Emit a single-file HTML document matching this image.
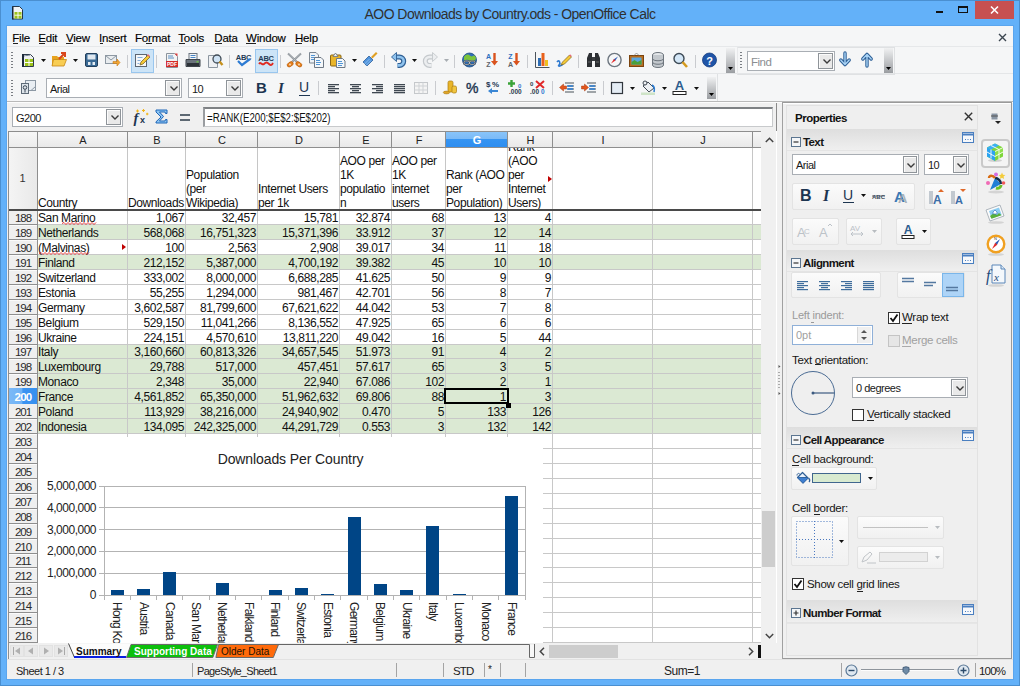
<!DOCTYPE html><html><head><meta charset="utf-8"><style>
*{margin:0;padding:0;box-sizing:border-box}
html,body{width:1020px;height:686px;overflow:hidden}
body{position:relative;background:#63B1F9;font-family:"Liberation Sans",sans-serif;color:#000}
.a{position:absolute}
.ui{font-size:11px;letter-spacing:-0.2px;color:#1e1e1e;white-space:nowrap}
.cell{position:absolute;font-size:12px;letter-spacing:-0.4px;line-height:15px;white-space:nowrap;color:#111}
.r{text-align:right}
.sep{position:absolute;width:1px;background:#c9cbcf}
svg{position:absolute;overflow:visible}
</style></head><body>
<div class="a" style="left:0;top:0;width:1020px;height:1px;background:#4a8fd0"></div>
<div class="a" style="left:0;top:0;width:1px;height:686px;background:#4a8fd0"></div>
<div class="a" style="left:1019px;top:0;width:1px;height:686px;background:#4a8fd0"></div>
<div class="a" style="left:0;top:685px;width:1020px;height:1px;background:#4a8fd0"></div>
<div class="a" style="left:300px;top:4px;width:420px;text-align:center;font-size:14px;letter-spacing:-0.55px;color:#303030;line-height:20px">AOO Downloads by Country.ods - OpenOffice Calc</div>
<svg style="left:11px;top:6px" width="12" height="14" viewBox="0 0 12 14"><path d="M1.5 0.5h7l3 3v9.5h-10z" fill="#f2f4f6" stroke="#26384a"/><path d="M1 0.5h1.5v13H1z" fill="#1a2738"/><rect x="3.5" y="6" width="7" height="6.5" fill="#9cc21b"/><path d="M3.5 9.2h7M7 6v6.5" stroke="#fff" stroke-width="0.9"/></svg>
<div class="a" style="left:936px;top:11px;width:7px;height:2px;background:#111"></div>
<div class="a" style="left:958px;top:6px;width:10px;height:7px;border:1px solid #111;border-top-width:2px"></div>
<div class="a" style="left:975px;top:1px;width:39px;height:18px;background:#C75050"></div>
<svg style="left:990px;top:6px" width="9" height="8"><path d="M1 0.5L8 7.5M8 0.5L1 7.5" stroke="#fff" stroke-width="1.6"/></svg>
<div class="a" style="left:6px;top:25px;width:1008px;height:655px;background:#5AA5EE"></div>
<div class="a" style="left:7px;top:26px;width:1006px;height:653px;background:#F5F6F7"></div>
<div class="a ui" style="left:12.3px;top:30px;font-size:11.5px;line-height:16px;color:#000;-webkit-text-stroke:0.15px #000">File</div>
<div class="a ui" style="left:38.3px;top:30px;font-size:11.5px;line-height:16px;color:#000;-webkit-text-stroke:0.15px #000">Edit</div>
<div class="a ui" style="left:66px;top:30px;font-size:11.5px;line-height:16px;color:#000;-webkit-text-stroke:0.15px #000">View</div>
<div class="a ui" style="left:99px;top:30px;font-size:11.5px;line-height:16px;color:#000;-webkit-text-stroke:0.15px #000">Insert</div>
<div class="a ui" style="left:135px;top:30px;font-size:11.5px;line-height:16px;color:#000;-webkit-text-stroke:0.15px #000">Format</div>
<div class="a ui" style="left:178.3px;top:30px;font-size:11.5px;line-height:16px;color:#000;-webkit-text-stroke:0.15px #000">Tools</div>
<div class="a ui" style="left:214.3px;top:30px;font-size:11.5px;line-height:16px;color:#000;-webkit-text-stroke:0.15px #000">Data</div>
<div class="a ui" style="left:246px;top:30px;font-size:11.5px;line-height:16px;color:#000;-webkit-text-stroke:0.15px #000">Window</div>
<div class="a ui" style="left:295px;top:30px;font-size:11.5px;line-height:16px;color:#000;-webkit-text-stroke:0.15px #000">Help</div>
<div class="a" style="left:12.5px;top:43px;width:5px;height:1px;background:#222"></div>
<div class="a" style="left:38.5px;top:43px;width:6px;height:1px;background:#222"></div>
<div class="a" style="left:66px;top:43px;width:7px;height:1px;background:#222"></div>
<div class="a" style="left:99.5px;top:43px;width:3px;height:1px;background:#222"></div>
<div class="a" style="left:146px;top:43px;width:6px;height:1px;background:#222"></div>
<div class="a" style="left:178.5px;top:43px;width:6px;height:1px;background:#222"></div>
<div class="a" style="left:214.5px;top:43px;width:7px;height:1px;background:#222"></div>
<div class="a" style="left:246px;top:43px;width:10px;height:1px;background:#222"></div>
<div class="a" style="left:295px;top:43px;width:7px;height:1px;background:#222"></div>
<svg style="left:998px;top:33px" width="9" height="9"><path d="M1 1L8 8M8 1L1 8" stroke="#3c4650" stroke-width="1.4"/></svg>
<div class="a" style="left:7px;top:46px;width:1006px;height:1px;background:#e6e8ea"></div>
<div class="a" style="left:7px;top:73px;width:1006px;height:1px;background:#e4e6e8"></div>
<div class="a" style="left:7px;top:102px;width:1006px;height:577px;background:#f0f0f0"></div>
<div class="a" style="left:7px;top:101px;width:1006px;height:1px;background:#b9b9b9"></div>
<div class="a" style="left:7px;top:102px;width:1006px;height:1px;background:#fcfcfc"></div>
<div class="a" style="left:11px;top:52px;width:2px;height:1px;background:#7a7e84"></div>
<div class="a" style="left:11px;top:55px;width:2px;height:1px;background:#7a7e84"></div>
<div class="a" style="left:11px;top:58px;width:2px;height:1px;background:#7a7e84"></div>
<div class="a" style="left:11px;top:61px;width:2px;height:1px;background:#7a7e84"></div>
<div class="a" style="left:11px;top:64px;width:2px;height:1px;background:#7a7e84"></div>
<div class="a" style="left:11px;top:67px;width:2px;height:1px;background:#7a7e84"></div>
<svg style="left:21px;top:53px" width="14" height="14" viewBox="0 0 14 14"><path d="M1.5 1.5h8l3 3v9h-11z" fill="#eef0f2" stroke="#2e3b4b"/><path d="M1 1h2v13H1z" fill="#1d2a3a"/><rect x="4" y="6" width="8" height="7" fill="#9cc21b"/><path d="M4 9.5h8M8 6v7" stroke="#fff" stroke-width="1"/><path d="M3 3c2-1 4 0 6-1" stroke="#7a8a9a" fill="none"/></svg>
<svg style="left:40.5px;top:58.5px" width="5" height="3" viewBox="0 0 5 3"><path d="M0 0h5L2.5 3z" fill="#111"/></svg>
<svg style="left:51px;top:52px" width="16" height="15" viewBox="0 0 16 15"><path d="M1 4h5l1 1h6v9H1z" fill="#e7a320"/><path d="M2.5 7.5h13l-2.5 6.5h-12z" fill="#f8cd53" stroke="#c78714" stroke-width="0.8"/><path d="M8 7l6-6M10 1h4v4" stroke="#d9461c" stroke-width="2" fill="none"/></svg>
<svg style="left:72.5px;top:58.5px" width="5" height="3" viewBox="0 0 5 3"><path d="M0 0h5L2.5 3z" fill="#111"/></svg>
<svg style="left:85px;top:53px" width="13" height="14" viewBox="0 0 13 14"><rect x="0.5" y="0.5" width="12" height="13" rx="1.5" fill="#3a6a95" stroke="#223f5c"/><rect x="2.5" y="1.5" width="8" height="5" fill="#dfe8f0"/><rect x="3" y="9" width="2.5" height="3" fill="#e6edf3"/><rect x="7.5" y="9" width="2.5" height="3" fill="#e6edf3"/></svg>
<svg style="left:105px;top:55px" width="15" height="11" viewBox="0 0 15 11"><rect x="0.5" y="0.5" width="11" height="8" fill="#e8ecef" stroke="#8d98a3"/><path d="M0.5 0.5l5.5 4.5l5.5-4.5" stroke="#8d98a3" fill="none"/><path d="M8 6.5h4v-2.5l3 3.5l-3 3.5v-2.5h-4z" fill="#f2a634" stroke="#c67a17" stroke-width="0.6"/></svg>
<div class="sep" style="left:127px;top:55px;height:13px"></div>
<div class="a" style="left:131px;top:49px;width:23px;height:24px;background:#cce4f7;border:1px solid #99c6ee"></div>
<svg style="left:135px;top:53px" width="15" height="15" viewBox="0 0 15 15"><rect x="0.5" y="1.5" width="11" height="12" fill="#f6f7f8" stroke="#5c6672"/><path d="M2.5 4.5h5M2.5 7.5h3M2.5 10.5h2" stroke="#6a9ad0" stroke-width="0.8"/><path d="M5 12l1-3l7-7l2 2l-7 7z" fill="#f5c935" stroke="#6d5a1e" stroke-width="0.7"/><path d="M12 2l2 2l1-1l-2-2z" fill="#e86a7a"/></svg>
<div class="sep" style="left:156px;top:55px;height:13px"></div>
<svg style="left:166px;top:53px" width="12" height="15" viewBox="0 0 12 15"><path d="M0.5 0.5h8l3 3v11h-11z" fill="#f3f3f3" stroke="#8a939c"/><path d="M2 3h5M2 5h6" stroke="#5b8fc4"/><rect x="0" y="8" width="12" height="6" fill="#d42a2a"/><path d="M8.5 0.5h3v3" fill="#e23b3b"/><text x="6" y="13" font-size="5" font-weight="bold" fill="#fff" text-anchor="middle" font-family="Liberation Sans">PDF</text></svg>
<svg style="left:185px;top:53px" width="16" height="15" viewBox="0 0 16 15"><rect x="4" y="0.5" width="8" height="6" fill="#f5f7f9" stroke="#6b7480"/><path d="M5.5 2.5h5M5.5 4.5h5" stroke="#4a86c5"/><path d="M1 6.5h14v7H1z" fill="#6b737c" stroke="#3f454c"/><rect x="2" y="10" width="12" height="3" fill="#2d3238"/><rect x="11.5" y="8" width="2" height="1.5" fill="#6ec04a"/></svg>
<svg style="left:208px;top:53px" width="15" height="15" viewBox="0 0 15 15"><path d="M0.5 2.5h7l2 2v10h-9z" fill="#eef0f3" stroke="#8c96a0"/><circle cx="9" cy="6" r="4" fill="#cfe3f5" stroke="#3f4a55" stroke-width="1.3"/><path d="M11.5 8.5l3 3.5" stroke="#c6901c" stroke-width="2.4"/></svg>
<div class="sep" style="left:229px;top:55px;height:13px"></div>
<svg style="left:236px;top:52px" width="15" height="16" viewBox="0 0 15 16"><text x="7.5" y="7.5" font-size="7.5" font-weight="bold" fill="#233a55" text-anchor="middle" font-family="Liberation Sans" letter-spacing="-0.3">ABC</text><path d="M2 9l4 4l8-6" stroke="#2c7bd3" stroke-width="2.2" fill="none"/></svg>
<div class="a" style="left:255px;top:49px;width:23px;height:24px;background:#cce4f7;border:1px solid #99c6ee"></div>
<svg style="left:258px;top:53px" width="16" height="14" viewBox="0 0 16 14"><text x="8" y="8" font-size="7.5" font-weight="bold" fill="#233a55" text-anchor="middle" font-family="Liberation Sans" letter-spacing="-0.3">ABC</text><path d="M1 11c2-3 3 2 5 0s3-2 5 0s3 1 4-1" stroke="#e0281e" stroke-width="1.8" fill="none"/></svg>
<div class="sep" style="left:280px;top:55px;height:13px"></div>
<svg style="left:286px;top:52px" width="17" height="16" viewBox="0 0 17 16"><path d="M2 1.5L11 10M15 1.5L6 10" stroke="#8a9096" stroke-width="1.8"/><path d="M2 1.5L11 10M15 1.5L6 10" stroke="#c9ced3" stroke-width="0.6"/><ellipse cx="4.2" cy="12.3" rx="3.3" ry="2.1" transform="rotate(-35 4.2 12.3)" fill="#e8821e" stroke="#b85c0c" stroke-width="0.7"/><ellipse cx="12.8" cy="12.3" rx="3.3" ry="2.1" transform="rotate(35 12.8 12.3)" fill="#e8821e" stroke="#b85c0c" stroke-width="0.7"/><circle cx="4" cy="12.5" r="0.9" fill="#f6e0c8"/><circle cx="13" cy="12.5" r="0.9" fill="#f6e0c8"/></svg>
<svg style="left:309px;top:52px" width="15" height="16" viewBox="0 0 15 16"><path d="M0.5 0.5h6.5l2.5 2.5v8h-9z" fill="#eef2f6" stroke="#7b8590"/><path d="M2 3.5h4M2 5.5h5M2 7.5h3" stroke="#3f8ad0" stroke-width="0.9"/><path d="M5.5 5.5h6.5l2.5 2.5v7.5h-9z" fill="#f4f7fa" stroke="#6f7985"/><path d="M7 8.5h4M7 10.5h5M7 12.5h4" stroke="#3f8ad0" stroke-width="0.9"/></svg>
<svg style="left:330px;top:52px" width="16" height="16" viewBox="0 0 16 16"><rect x="0.5" y="3" width="10.5" height="11" rx="1" fill="#e9b52a" stroke="#8a6514"/><path d="M3 4.5l2.5-3.5l2.5 3.5z" fill="#eef0f2" stroke="#6a7480" stroke-width="0.8"/><path d="M6.5 6.5h6l2.5 2.5v6.5h-8.5z" fill="#f4f7fa" stroke="#6f7985"/><path d="M8 9.5h4M8 11.5h5M8 13.5h4" stroke="#3f8ad0" stroke-width="0.9"/></svg>
<svg style="left:351.5px;top:58.5px" width="5" height="3" viewBox="0 0 5 3"><path d="M0 0h5L2.5 3z" fill="#111"/></svg>
<svg style="left:362px;top:52px" width="16" height="16" viewBox="0 0 16 16"><path d="M1 10l6-6l4 4l-6 6z" fill="#4f93dc" stroke="#2d5f9a" stroke-width="0.8"/><path d="M2.5 12l5-5M4 13.5l5-5" stroke="#9cc6f0" stroke-width="0.8"/><path d="M9 5l5-5l1.5 1.5l-5 5z" fill="#e0a025"/></svg>
<div class="sep" style="left:384px;top:55px;height:13px"></div>
<svg style="left:391px;top:52px" width="16" height="16" viewBox="0 0 16 16"><path d="M4 5h4.5a4.2 4.2 0 0 1 0 8.4h-2" stroke="#2f5f94" stroke-width="5" fill="none"/><path d="M4 5h4.5a4.2 4.2 0 0 1 0 8.4h-2" stroke="#8fc3ee" stroke-width="2.6" fill="none"/><path d="M0.5 5l5-4.5v9z" fill="#8fc3ee" stroke="#2f5f94" stroke-width="0.9" stroke-linejoin="round"/></svg>
<svg style="left:411.5px;top:58.5px" width="5" height="3" viewBox="0 0 5 3"><path d="M0 0h5L2.5 3z" fill="#111"/></svg>
<svg style="left:422px;top:52px" width="16" height="16" viewBox="0 0 16 16"><path d="M12 5h-4.5a4.2 4.2 0 0 0 0 8.4h2" stroke="#c4c8cc" stroke-width="5" fill="none"/><path d="M12 5h-4.5a4.2 4.2 0 0 0 0 8.4h2" stroke="#eceef0" stroke-width="2.6" fill="none"/><path d="M15.5 5l-5-4.5v9z" fill="#eceef0" stroke="#c4c8cc" stroke-width="0.9" stroke-linejoin="round"/></svg>
<svg style="left:443.5px;top:58.5px" width="5" height="3" viewBox="0 0 5 3"><path d="M0 0h5L2.5 3z" fill="#a8adb2"/></svg>
<div class="sep" style="left:454px;top:55px;height:13px"></div>
<svg style="left:462px;top:52px" width="15" height="16" viewBox="0 0 15 16"><circle cx="7.5" cy="8" r="7" fill="#2f6fb8" stroke="#1d4a80" stroke-width="0.8"/><path d="M2 5c1-2 3-3 5-2s2 2 4 1s2 0 3 2l-1 3c-2-1-3 1-5 0s-3-2-6 0z" fill="#7cc43a"/><rect x="2" y="9" width="5.5" height="3.5" rx="1.7" fill="none" stroke="#3a3f44" stroke-width="1.6"/><rect x="7.5" y="9" width="5.5" height="3.5" rx="1.7" fill="none" stroke="#3a3f44" stroke-width="1.6"/><rect x="2" y="9" width="5.5" height="3.5" rx="1.7" fill="none" stroke="#e6e9ec" stroke-width="0.6"/><rect x="7.5" y="9" width="5.5" height="3.5" rx="1.7" fill="none" stroke="#e6e9ec" stroke-width="0.6"/></svg>
<svg style="left:485px;top:52px" width="13" height="16" viewBox="0 0 13 16"><text x="3.5" y="6.5" font-size="7" font-weight="bold" fill="#2d6fc0" text-anchor="middle" font-family="Liberation Sans">A</text><text x="3.5" y="14.5" font-size="7" font-weight="bold" fill="#5d646b" text-anchor="middle" font-family="Liberation Sans">Z</text><path d="M9.5 1v10" stroke="#d9531e" stroke-width="2.4"/><path d="M6 9h7l-3.5 4.5z" fill="#d9531e"/></svg>
<svg style="left:507px;top:52px" width="13" height="16" viewBox="0 0 13 16"><text x="3.5" y="6.5" font-size="7" font-weight="bold" fill="#2d6fc0" text-anchor="middle" font-family="Liberation Sans">Z</text><text x="3.5" y="14.5" font-size="7" font-weight="bold" fill="#5d646b" text-anchor="middle" font-family="Liberation Sans">A</text><path d="M9.5 1v10" stroke="#d9531e" stroke-width="2.4"/><path d="M6 9h7l-3.5 4.5z" fill="#d9531e"/></svg>
<div class="sep" style="left:527px;top:55px;height:13px"></div>
<svg style="left:535px;top:52px" width="15" height="16" viewBox="0 0 15 16"><path d="M0.5 0v15.5h14" stroke="#4b535b" fill="none"/><rect x="3" y="6" width="3" height="8" fill="#2f6eb5"/><rect x="6.5" y="1" width="3" height="13" fill="#e8611c"/><rect x="10" y="8" width="3" height="6" fill="#f0c020"/></svg>
<svg style="left:556px;top:53px" width="15" height="14" viewBox="0 0 15 14"><path d="M1 9c2-3 4 1 2 3s3 1 4-1" stroke="#2f7ad0" stroke-width="1.6" fill="none"/><path d="M5 12l1.5-3l7-7l2 2l-7 7z" fill="#f5c935" stroke="#7b6420" stroke-width="0.7"/><path d="M13 2l2 2l0.5-1.5l-1-1z" fill="#e86a7a"/></svg>
<div class="sep" style="left:578px;top:55px;height:13px"></div>
<svg style="left:586px;top:52px" width="15" height="16" viewBox="0 0 15 16"><path d="M1 6l2-5h3v14H1z" fill="#2c2f33"/><path d="M14 6l-2-5h-3v14h5z" fill="#2c2f33"/><rect x="6" y="5" width="3" height="4" fill="#3a3d41"/><path d="M2 10h3M10 10h3" stroke="#777" stroke-width="0.8"/></svg>
<svg style="left:607px;top:52px" width="15" height="16" viewBox="0 0 15 16"><circle cx="7.5" cy="8" r="6.6" fill="#f6f7f8" stroke="#6d7680" stroke-width="1.4"/><path d="M11 4.5l-3 4.5l-1.5-1.5z" fill="#2d5db8"/><path d="M4 11.5l3-4.5l1.5 1.5z" fill="#e22a2a"/></svg>
<svg style="left:629px;top:53px" width="15" height="14" viewBox="0 0 15 14"><rect x="0.5" y="2.5" width="14" height="11" fill="#b86d1e" stroke="#7b4510"/><rect x="2.5" y="4.5" width="10" height="7" fill="#5aa7e0"/><path d="M2.5 9l3-2l3 2l4-2v4.5h-10z" fill="#4aa03a"/><path d="M5 2.5l2.5-2.5l2.5 2.5" stroke="#888" fill="none" stroke-width="0.8"/></svg>
<svg style="left:652px;top:52px" width="12" height="16" viewBox="0 0 12 16"><ellipse cx="6" cy="3" rx="5.5" ry="2.5" fill="#e3e6e9" stroke="#6e767e"/><path d="M0.5 3v10c0 3.3 11 3.3 11 0V3" fill="#c3c8cd" stroke="#6e767e"/><path d="M0.5 6.5c0 3 11 3 11 0M0.5 10c0 3 11 3 11 0" stroke="#6e767e" fill="none"/></svg>
<svg style="left:673px;top:52px" width="15" height="16" viewBox="0 0 15 16"><circle cx="6" cy="6.5" r="5" fill="#d4e7f7" stroke="#3d4a56" stroke-width="1.4"/><path d="M9.5 10l4.5 5" stroke="#d49a1e" stroke-width="2.6"/></svg>
<div class="sep" style="left:695px;top:55px;height:13px"></div>
<svg style="left:702px;top:52px" width="15" height="16" viewBox="0 0 15 16"><circle cx="7.5" cy="8" r="7" fill="#1f55a8" stroke="#163e80" stroke-width="0.8"/><text x="7.5" y="12.5" font-size="11" font-weight="bold" fill="#fff" text-anchor="middle" font-family="Liberation Sans">?</text></svg>
<div class="a" style="left:726px;top:48px;width:9px;height:25px;background:linear-gradient(#f0f1f2,#9a9da1)"></div>
<svg style="left:728px;top:67px" width="5" height="3" viewBox="0 0 5 3"><path d="M0 0h5L2.5 3z" fill="#000"/></svg>
<div class="a" style="left:737px;top:47px;width:158px;height:28px;border:1px solid #dfe1e3;border-left-color:#e8e9eb"></div>
<div class="a" style="left:740px;top:52px;width:2px;height:1px;background:#7a7e84"></div>
<div class="a" style="left:740px;top:55px;width:2px;height:1px;background:#7a7e84"></div>
<div class="a" style="left:740px;top:58px;width:2px;height:1px;background:#7a7e84"></div>
<div class="a" style="left:740px;top:61px;width:2px;height:1px;background:#7a7e84"></div>
<div class="a" style="left:740px;top:64px;width:2px;height:1px;background:#7a7e84"></div>
<div class="a" style="left:740px;top:67px;width:2px;height:1px;background:#7a7e84"></div>
<div class="a" style="left:747px;top:51px;width:88px;height:20px;background:#fff;border:1px solid #a9aeb4"></div>
<div class="a ui" style="left:751px;top:52px;font-size:11.5px;color:#8a8d91;line-height:20px;letter-spacing:-0.5px">Find</div>
<div class="a" style="left:818px;top:53px;width:15px;height:16px;background:#e9e9e9;border:1px solid #8f9499;box-shadow:inset 1px 1px 0 #fbfbfb"></div>
<svg style="left:822.5px;top:59.0px" width="8" height="5" viewBox="0 0 8 5"><path d="M0.5 0.5l3.5 3.5l3.5-3.5" stroke="#3a3a3a" stroke-width="1.4" fill="none"/></svg>
<svg style="left:839px;top:52px" width="12" height="15" viewBox="0 0 12 15"><path d="M6 1v11M1.8 8l4.2 4.6l4.2-4.6" stroke="#2d5f96" stroke-width="3.4" fill="none" stroke-linecap="round" stroke-linejoin="round"/><path d="M6 1v11M1.8 8l4.2 4.6l4.2-4.6" stroke="#a9d3f5" stroke-width="1.4" fill="none" stroke-linecap="round" stroke-linejoin="round"/></svg>
<svg style="left:861px;top:52px" width="12" height="15" viewBox="0 0 12 15"><path d="M6 14V3M1.8 7l4.2-4.6l4.2 4.6" stroke="#2d5f96" stroke-width="3.4" fill="none" stroke-linecap="round" stroke-linejoin="round"/><path d="M6 14V3M1.8 7l4.2-4.6l4.2 4.6" stroke="#a9d3f5" stroke-width="1.4" fill="none" stroke-linecap="round" stroke-linejoin="round"/></svg>
<div class="a" style="left:884px;top:48px;width:9px;height:25px;background:linear-gradient(#f0f1f2,#9a9da1)"></div>
<svg style="left:886px;top:67px" width="5" height="3" viewBox="0 0 5 3"><path d="M0 0h5L2.5 3z" fill="#000"/></svg>
<div class="a" style="left:11px;top:80px;width:2px;height:1px;background:#7a7e84"></div>
<div class="a" style="left:11px;top:83px;width:2px;height:1px;background:#7a7e84"></div>
<div class="a" style="left:11px;top:86px;width:2px;height:1px;background:#7a7e84"></div>
<div class="a" style="left:11px;top:89px;width:2px;height:1px;background:#7a7e84"></div>
<div class="a" style="left:11px;top:92px;width:2px;height:1px;background:#7a7e84"></div>
<div class="a" style="left:11px;top:95px;width:2px;height:1px;background:#7a7e84"></div>
<svg style="left:21px;top:80px" width="15" height="14" viewBox="0 0 15 14"><rect x="4.5" y="0.5" width="10" height="10" fill="#e9eef3" stroke="#8c98a4"/><path d="M10 10.5l4.5-4" stroke="#8c98a4"/><rect x="0.5" y="3.5" width="7" height="10" fill="#dde4ea" stroke="#5e6b78"/><circle cx="4" cy="7.5" r="1.8" fill="none" stroke="#3b4756"/><path d="M4 9.5v3" stroke="#3b4756"/></svg>
<div class="a" style="left:46px;top:78px;width:136px;height:20px;background:#fff;border:1px solid #a9aeb4"></div>
<div class="a ui" style="left:50px;top:79px;font-size:11px;color:#1a1a1a;line-height:20px;letter-spacing:-0.5px">Arial</div>
<div class="a" style="left:165px;top:80px;width:15px;height:16px;background:#e9e9e9;border:1px solid #8f9499;box-shadow:inset 1px 1px 0 #fbfbfb"></div>
<svg style="left:169.5px;top:86.0px" width="8" height="5" viewBox="0 0 8 5"><path d="M0.5 0.5l3.5 3.5l3.5-3.5" stroke="#3a3a3a" stroke-width="1.4" fill="none"/></svg>
<div class="a" style="left:188px;top:78px;width:55px;height:20px;background:#fff;border:1px solid #a9aeb4"></div>
<div class="a ui" style="left:192px;top:79px;font-size:11px;color:#1a1a1a;line-height:20px;letter-spacing:-0.5px">10</div>
<div class="a" style="left:226px;top:80px;width:15px;height:16px;background:#e9e9e9;border:1px solid #8f9499;box-shadow:inset 1px 1px 0 #fbfbfb"></div>
<svg style="left:230.5px;top:86.0px" width="8" height="5" viewBox="0 0 8 5"><path d="M0.5 0.5l3.5 3.5l3.5-3.5" stroke="#3a3a3a" stroke-width="1.4" fill="none"/></svg>
<div class="a" style="left:256px;top:79px;font-size:15px;font-weight:bold;color:#1d3550;line-height:18px">B</div>
<div class="a" style="left:278px;top:79px;font-size:15px;font-style:italic;font-weight:bold;color:#1d3550;line-height:18px;font-family:'Liberation Serif'">I</div>
<div class="a" style="left:299px;top:79px;font-size:14px;color:#1d3550;line-height:17px">U</div>
<div class="a" style="left:299px;top:95px;width:11px;height:1px;background:#1d3550"></div>
<div class="sep" style="left:318px;top:81px;height:14px"></div>
<svg style="left:328px;top:84px" width="11" height="10" viewBox="0 0 11 10"><rect x="0" y="0" width="11" height="1.3" fill="#3f4852"/><rect x="0" y="2" width="7" height="1.3" fill="#3f4852"/><rect x="0" y="4" width="11" height="1.3" fill="#3f4852"/><rect x="0" y="6" width="7" height="1.3" fill="#3f4852"/><rect x="0" y="8" width="11" height="1.3" fill="#3f4852"/></svg>
<svg style="left:350px;top:84px" width="11" height="10" viewBox="0 0 11 10"><rect x="0.0" y="0" width="11" height="1.3" fill="#3f4852"/><rect x="2.0" y="2" width="7" height="1.3" fill="#3f4852"/><rect x="0.0" y="4" width="11" height="1.3" fill="#3f4852"/><rect x="2.0" y="6" width="7" height="1.3" fill="#3f4852"/><rect x="0.0" y="8" width="11" height="1.3" fill="#3f4852"/></svg>
<svg style="left:372px;top:84px" width="11" height="10" viewBox="0 0 11 10"><rect x="0" y="0" width="11" height="1.3" fill="#3f4852"/><rect x="4" y="2" width="7" height="1.3" fill="#3f4852"/><rect x="0" y="4" width="11" height="1.3" fill="#3f4852"/><rect x="4" y="6" width="7" height="1.3" fill="#3f4852"/><rect x="0" y="8" width="11" height="1.3" fill="#3f4852"/></svg>
<svg style="left:394px;top:84px" width="11" height="10" viewBox="0 0 11 10"><rect x="0" y="0" width="11" height="1.3" fill="#3f4852"/><rect x="0" y="2" width="11" height="1.3" fill="#3f4852"/><rect x="0" y="4" width="11" height="1.3" fill="#3f4852"/><rect x="0" y="6" width="11" height="1.3" fill="#3f4852"/><rect x="0" y="8" width="11" height="1.3" fill="#3f4852"/></svg>
<svg style="left:414px;top:82px" width="14" height="12" viewBox="0 0 14 12"><rect x="0.5" y="0.5" width="13" height="11" fill="#f4f4f4" stroke="#c5c8cb"/><path d="M0.5 4h13M0.5 8h13M5 0.5v11M9 0.5v11" stroke="#cfd2d5"/></svg>
<div class="sep" style="left:435px;top:81px;height:14px"></div>
<svg style="left:443px;top:80px" width="14" height="14" viewBox="0 0 14 14"><rect x="5" y="1" width="5" height="11" rx="1.5" fill="#e9b52a" stroke="#a97a10" stroke-width="0.7"/><rect x="9" y="6" width="4.5" height="7" rx="1.5" fill="#f0c540" stroke="#a97a10" stroke-width="0.7"/><ellipse cx="3.5" cy="12.5" rx="3.2" ry="1.4" fill="#e0a52a" stroke="#a97a10" stroke-width="0.6"/></svg>
<div class="a" style="left:466px;top:80px;font-size:14px;color:#1d3550;line-height:17px;-webkit-text-stroke:0.4px #1d3550">%</div>
<svg style="left:486px;top:80px" width="16" height="14" viewBox="0 0 16 14"><text x="0" y="7" font-size="8" font-weight="bold" fill="#1d3550" font-family="Liberation Sans">$</text><text x="6" y="7" font-size="8" font-weight="bold" fill="#1d3550" font-family="Liberation Sans">%</text><path d="M5 11h7" stroke="#3a86d4" stroke-width="2"/><path d="M2 11l4-3v6z" fill="#3a86d4"/></svg>
<svg style="left:508px;top:80px" width="16" height="14" viewBox="0 0 16 14"><path d="M3.5 0v7M0 3.5h7" stroke="#3aa338" stroke-width="2.4"/><text x="10" y="8" font-size="6" font-weight="bold" fill="#2f78d0" font-family="Liberation Sans">0</text><text x="1" y="13.5" font-size="6.5" font-weight="bold" fill="#2c3e50" font-family="Liberation Sans">.000</text></svg>
<svg style="left:530px;top:80px" width="16" height="14" viewBox="0 0 16 14"><text x="0" y="6" font-size="6" font-weight="bold" fill="#2c3e50" font-family="Liberation Sans">0</text><path d="M6 1l8 7M14 1l-8 7" stroke="#e0282a" stroke-width="2"/><text x="0" y="13.5" font-size="6.5" font-weight="bold" fill="#2c3e50" font-family="Liberation Sans">.00</text><text x="11" y="13.5" font-size="6.5" font-weight="bold" fill="#2f78d0" font-family="Liberation Sans">0</text></svg>
<div class="sep" style="left:552px;top:81px;height:14px"></div>
<svg style="left:559px;top:81px" width="16" height="13" viewBox="0 0 16 13"><path d="M6 2h9M9 5h6M9 8h6M6 11h9" stroke="#4a525a" stroke-width="1.1"/><path d="M8 5h6M8 8h6" stroke="#2d7dd2" stroke-width="1.4"/><path d="M0.5 6.5l4-3.5v2h3v3h-3v2z" fill="#e2571e" stroke="#a83a10" stroke-width="0.5"/></svg>
<svg style="left:581px;top:81px" width="16" height="13" viewBox="0 0 16 13"><path d="M6 2h9M9 5h6M9 8h6M6 11h9" stroke="#4a525a" stroke-width="1.1"/><path d="M8 5h6M8 8h6" stroke="#2d7dd2" stroke-width="1.4"/><path d="M7.5 6.5l-4-3.5v2h-3v3h3v2z" fill="#e2571e" stroke="#a83a10" stroke-width="0.5"/></svg>
<div class="sep" style="left:603px;top:81px;height:14px"></div>
<svg style="left:611px;top:82px" width="12" height="12" viewBox="0 0 12 12"><rect x="0.5" y="0.5" width="11" height="11" fill="#e4ecf4" stroke="#30363d" stroke-width="1.2"/></svg>
<svg style="left:629.5px;top:86.5px" width="5" height="3" viewBox="0 0 5 3"><path d="M0 0h5L2.5 3z" fill="#111"/></svg>
<svg style="left:641px;top:80px" width="15" height="15" viewBox="0 0 15 15"><path d="M2 6l5-4l6 6l-5 4z" fill="#eef1f4" stroke="#3f4852"/><path d="M11 5c2 1 3 3 2 7" stroke="#2d7dd2" stroke-width="1.6" fill="none"/><circle cx="4" cy="3" r="2" fill="#eef1f4" stroke="#3f4852"/><rect x="0" y="12.5" width="14" height="2.5" fill="#cfe4c8"/></svg>
<svg style="left:661.5px;top:86.5px" width="5" height="3" viewBox="0 0 5 3"><path d="M0 0h5L2.5 3z" fill="#111"/></svg>
<svg style="left:672px;top:79px" width="16" height="16" viewBox="0 0 16 16"><text x="7.5" y="11" font-size="13" font-weight="bold" fill="#2b5c8e" text-anchor="middle" font-family="Liberation Sans">A</text><rect x="1" y="12.5" width="13" height="3" fill="#fff" stroke="#222"/></svg>
<svg style="left:693.5px;top:86.5px" width="5" height="3" viewBox="0 0 5 3"><path d="M0 0h5L2.5 3z" fill="#111"/></svg>
<div class="a" style="left:707px;top:77px;width:9px;height:22px;background:linear-gradient(#f0f1f2,#9a9da1)"></div>
<svg style="left:709px;top:93px" width="5" height="3" viewBox="0 0 5 3"><path d="M0 0h5L2.5 3z" fill="#000"/></svg>
<div class="a" style="left:717px;top:74px;width:1px;height:27px;background:#dfe1e3"></div>
<div class="a" style="left:12px;top:107px;width:111px;height:20px;background:#fff;border:1px solid #a9aeb4"></div>
<div class="a ui" style="left:16px;top:108px;font-size:11px;color:#1a1a1a;line-height:20px;letter-spacing:-0.5px">G200</div>
<div class="a" style="left:106px;top:109px;width:15px;height:16px;background:#e9e9e9;border:1px solid #8f9499;box-shadow:inset 1px 1px 0 #fbfbfb"></div>
<svg style="left:110.5px;top:115.0px" width="8" height="5" viewBox="0 0 8 5"><path d="M0.5 0.5l3.5 3.5l3.5-3.5" stroke="#3a3a3a" stroke-width="1.4" fill="none"/></svg>
<svg style="left:133px;top:108px" width="16" height="18" viewBox="0 0 16 18"><text x="0.5" y="14.5" font-size="14.5" font-style="italic" font-weight="bold" font-family="Liberation Serif" fill="#1d3550">f</text><text x="7" y="15" font-size="9" font-family="Liberation Sans" font-weight="bold" fill="#1d3550">x</text><path d="M3 3h3M4.5 1.5v3M9 2.5h3M10.5 1v3M13 6h2.5M14.2 4.8v2.5" stroke="#f2b418" stroke-width="1.1"/></svg>
<svg style="left:155px;top:109px" width="14" height="15" viewBox="0 0 14 15"><path d="M1 1h11v3.5h-1.5L10 3H4.5l4 4.5l-4 4.5H10l0.5-1.5H12v3.5H1v-1.2l5-4.8l-5-5z" fill="#8cc4f2" stroke="#1f66b8" stroke-width="1"/></svg>
<div class="a" style="left:180px;top:114px;width:10px;height:2px;background:#5d6872"></div>
<div class="a" style="left:180px;top:119px;width:10px;height:2px;background:#5d6872"></div>
<div class="a" style="left:203px;top:107px;width:570px;height:20px;background:#fff;border:1px solid #c8cacc;border-top:2px solid #7e8184;border-left:2px solid #9a9da0"></div>
<div class="a ui" style="left:207px;top:109px;font-size:12px;line-height:18px;color:#111;letter-spacing:0px;transform:scaleX(0.81);transform-origin:0 0">=RANK(E200;$E$2:$E$202)</div>
<div class="a" style="left:776px;top:103px;width:1px;height:556px;background:#8a8a8a"></div>
<div class="a" style="left:777px;top:103px;width:1px;height:556px;background:#fafafa"></div>
<div class="a" style="left:8px;top:131px;width:769px;height:512px;background:#fff"></div>
<div class="a" style="left:8px;top:131px;width:753px;height:17px;background:linear-gradient(#f7f7f7,#e9e9e9);border-top:1px solid #8e8e8e;border-bottom:1px solid #8e8e8e;border-left:1px solid #8e8e8e"></div>
<div class="a" style="left:37px;top:132px;width:90px;text-align:center;font-size:11px;color:#222;line-height:15px;padding-left:2px;margin-top:1px">A</div>
<div class="a" style="left:127px;top:132px;width:58px;text-align:center;font-size:11px;color:#222;line-height:15px;padding-left:2px;margin-top:1px">B</div>
<div class="a" style="left:185px;top:132px;width:72px;text-align:center;font-size:11px;color:#222;line-height:15px;padding-left:2px;margin-top:1px">C</div>
<div class="a" style="left:257px;top:132px;width:82px;text-align:center;font-size:11px;color:#222;line-height:15px;padding-left:2px;margin-top:1px">D</div>
<div class="a" style="left:339px;top:132px;width:52px;text-align:center;font-size:11px;color:#222;line-height:15px;padding-left:2px;margin-top:1px">E</div>
<div class="a" style="left:391px;top:132px;width:54px;text-align:center;font-size:11px;color:#222;line-height:15px;padding-left:2px;margin-top:1px">F</div>
<div class="a" style="left:445px;top:132px;width:62px;height:15px;background:linear-gradient(#88c4fa 0%,#7cbaf6 45%,#3594f2 50%,#2f8ef0 100%);border-left:1px solid #1f7ee8"></div>
<div class="a" style="left:445px;top:132px;width:62px;text-align:center;font-size:11px;font-weight:bold;color:#fff;line-height:15px;padding-left:2px;margin-top:1px">G</div>
<div class="a" style="left:507px;top:132px;width:45px;text-align:center;font-size:11px;color:#222;line-height:15px;padding-left:2px;margin-top:1px">H</div>
<div class="a" style="left:552px;top:132px;width:100px;text-align:center;font-size:11px;color:#222;line-height:15px;padding-left:2px;margin-top:1px">I</div>
<div class="a" style="left:652px;top:132px;width:100px;text-align:center;font-size:11px;color:#222;line-height:15px;padding-left:2px;margin-top:1px">J</div>
<div class="a" style="left:37px;top:131px;width:1px;height:17px;background:#8e8e8e"></div>
<div class="a" style="left:127px;top:131px;width:1px;height:17px;background:#8e8e8e"></div>
<div class="a" style="left:185px;top:131px;width:1px;height:17px;background:#8e8e8e"></div>
<div class="a" style="left:257px;top:131px;width:1px;height:17px;background:#8e8e8e"></div>
<div class="a" style="left:339px;top:131px;width:1px;height:17px;background:#8e8e8e"></div>
<div class="a" style="left:391px;top:131px;width:1px;height:17px;background:#8e8e8e"></div>
<div class="a" style="left:445px;top:131px;width:1px;height:17px;background:#8e8e8e"></div>
<div class="a" style="left:507px;top:131px;width:1px;height:17px;background:#8e8e8e"></div>
<div class="a" style="left:552px;top:131px;width:1px;height:17px;background:#8e8e8e"></div>
<div class="a" style="left:652px;top:131px;width:1px;height:17px;background:#8e8e8e"></div>
<div class="a" style="left:752px;top:131px;width:1px;height:17px;background:#8e8e8e"></div>
<div class="a" style="left:8px;top:131px;width:30px;height:512px;background:#efefef;border-left:1px solid #8e8e8e;border-right:1px solid #8e8e8e"></div>
<div class="a" style="left:8px;top:131px;width:753px;height:1px;background:#8e8e8e"></div>
<div class="a" style="left:9px;top:132px;width:28px;height:15px;background:linear-gradient(#f7f7f7,#ececec)"></div>
<div class="a" style="left:8px;top:147px;width:753px;height:1px;background:#8e8e8e"></div>
<div class="a" style="left:9px;top:148px;width:28px;height:61px;background:linear-gradient(90deg,#f4f4f4,#e9e9e9)"></div>
<div class="a" style="left:9px;top:171px;width:27px;text-align:center;font-size:11px;color:#333;line-height:15px">1</div>
<div class="a" style="left:127px;top:148px;width:1px;height:61px;background:#c6c6c6"></div>
<div class="a" style="left:185px;top:148px;width:1px;height:61px;background:#c6c6c6"></div>
<div class="a" style="left:257px;top:148px;width:1px;height:61px;background:#c6c6c6"></div>
<div class="a" style="left:339px;top:148px;width:1px;height:61px;background:#c6c6c6"></div>
<div class="a" style="left:391px;top:148px;width:1px;height:61px;background:#c6c6c6"></div>
<div class="a" style="left:445px;top:148px;width:1px;height:61px;background:#c6c6c6"></div>
<div class="a" style="left:507px;top:148px;width:1px;height:61px;background:#c6c6c6"></div>
<div class="a" style="left:552px;top:148px;width:1px;height:61px;background:#c6c6c6"></div>
<div class="a" style="left:652px;top:148px;width:1px;height:61px;background:#c6c6c6"></div>
<div class="a" style="left:752px;top:148px;width:1px;height:61px;background:#c6c6c6"></div>
<div class="a" style="left:0;top:148px;width:761px;height:61px;overflow:hidden">
<div class="cell" style="left:38px;top:48px;line-height:14px">Country</div>
<div class="cell" style="left:128px;top:48px;line-height:14px">Downloads</div>
<div class="cell" style="left:186px;top:20px;line-height:14px">Population</div>
<div class="cell" style="left:186px;top:34px;line-height:14px">(per</div>
<div class="cell" style="left:186px;top:48px;line-height:14px">Wikipedia)</div>
<div class="cell" style="left:258px;top:34px;line-height:14px">Internet Users</div>
<div class="cell" style="left:258px;top:48px;line-height:14px">per 1k</div>
<div class="cell" style="left:340px;top:6px;line-height:14px">AOO per</div>
<div class="cell" style="left:340px;top:20px;line-height:14px">1K</div>
<div class="cell" style="left:340px;top:34px;line-height:14px">populatio</div>
<div class="cell" style="left:340px;top:48px;line-height:14px">n</div>
<div class="cell" style="left:392px;top:6px;line-height:14px">AOO per</div>
<div class="cell" style="left:392px;top:20px;line-height:14px">1K</div>
<div class="cell" style="left:392px;top:34px;line-height:14px">internet</div>
<div class="cell" style="left:392px;top:48px;line-height:14px">users</div>
<div class="cell" style="left:446px;top:20px;line-height:14px">Rank (AOO</div>
<div class="cell" style="left:446px;top:34px;line-height:14px">per</div>
<div class="cell" style="left:446px;top:48px;line-height:14px">Population)</div>
<div class="cell" style="left:508px;top:-8px;line-height:14px">Rank</div>
<div class="cell" style="left:508px;top:6px;line-height:14px">(AOO</div>
<div class="cell" style="left:508px;top:20px;line-height:14px">per</div>
<div class="cell" style="left:508px;top:34px;line-height:14px">Internet</div>
<div class="cell" style="left:508px;top:48px;line-height:14px">Users)</div>
</div>
<svg style="left:548px;top:176px" width="4" height="6" viewBox="0 0 4 6"><path d="M0 0l4 3l-4 3z" fill="#c00000"/></svg>
<div class="a" style="left:8px;top:209px;width:753px;height:2px;background:#4a4a4a"></div>
<div class="a" style="left:38px;top:225px;width:723px;height:14px;background:#dbe9d3"></div>
<div class="a" style="left:38px;top:255px;width:723px;height:14px;background:#dbe9d3"></div>
<div class="a" style="left:38px;top:345px;width:723px;height:13px;background:#dbe9d3"></div>
<div class="a" style="left:38px;top:359px;width:723px;height:14px;background:#dbe9d3"></div>
<div class="a" style="left:38px;top:374px;width:723px;height:14px;background:#dbe9d3"></div>
<div class="a" style="left:38px;top:389px;width:723px;height:14px;background:#dbe9d3"></div>
<div class="a" style="left:38px;top:404px;width:723px;height:14px;background:#dbe9d3"></div>
<div class="a" style="left:38px;top:419px;width:723px;height:14px;background:#dbe9d3"></div>
<div class="a" style="left:38px;top:224px;width:723px;height:1px;background:#c8c8c8"></div>
<div class="a" style="left:38px;top:239px;width:723px;height:1px;background:#c8c8c8"></div>
<div class="a" style="left:38px;top:254px;width:723px;height:1px;background:#c8c8c8"></div>
<div class="a" style="left:38px;top:269px;width:723px;height:1px;background:#c8c8c8"></div>
<div class="a" style="left:38px;top:284px;width:723px;height:1px;background:#c8c8c8"></div>
<div class="a" style="left:38px;top:299px;width:723px;height:1px;background:#c8c8c8"></div>
<div class="a" style="left:38px;top:314px;width:723px;height:1px;background:#c8c8c8"></div>
<div class="a" style="left:38px;top:329px;width:723px;height:1px;background:#c8c8c8"></div>
<div class="a" style="left:38px;top:344px;width:723px;height:1px;background:#c8c8c8"></div>
<div class="a" style="left:38px;top:358px;width:723px;height:1px;background:#c8c8c8"></div>
<div class="a" style="left:38px;top:373px;width:723px;height:1px;background:#c8c8c8"></div>
<div class="a" style="left:38px;top:388px;width:723px;height:1px;background:#c8c8c8"></div>
<div class="a" style="left:38px;top:403px;width:723px;height:1px;background:#c8c8c8"></div>
<div class="a" style="left:38px;top:418px;width:723px;height:1px;background:#c8c8c8"></div>
<div class="a" style="left:38px;top:433px;width:723px;height:1px;background:#c8c8c8"></div>
<div class="a" style="left:543px;top:448px;width:218px;height:1px;background:#c8c8c8"></div>
<div class="a" style="left:543px;top:463px;width:218px;height:1px;background:#c8c8c8"></div>
<div class="a" style="left:543px;top:478px;width:218px;height:1px;background:#c8c8c8"></div>
<div class="a" style="left:543px;top:493px;width:218px;height:1px;background:#c8c8c8"></div>
<div class="a" style="left:543px;top:508px;width:218px;height:1px;background:#c8c8c8"></div>
<div class="a" style="left:543px;top:523px;width:218px;height:1px;background:#c8c8c8"></div>
<div class="a" style="left:543px;top:538px;width:218px;height:1px;background:#c8c8c8"></div>
<div class="a" style="left:543px;top:553px;width:218px;height:1px;background:#c8c8c8"></div>
<div class="a" style="left:543px;top:567px;width:218px;height:1px;background:#c8c8c8"></div>
<div class="a" style="left:543px;top:582px;width:218px;height:1px;background:#c8c8c8"></div>
<div class="a" style="left:543px;top:597px;width:218px;height:1px;background:#c8c8c8"></div>
<div class="a" style="left:543px;top:612px;width:218px;height:1px;background:#c8c8c8"></div>
<div class="a" style="left:543px;top:627px;width:218px;height:1px;background:#c8c8c8"></div>
<div class="a" style="left:543px;top:642px;width:218px;height:1px;background:#c8c8c8"></div>
<div class="a" style="left:127px;top:211px;width:1px;height:227px;background:#c8c8c8"></div>
<div class="a" style="left:185px;top:211px;width:1px;height:227px;background:#c8c8c8"></div>
<div class="a" style="left:257px;top:211px;width:1px;height:227px;background:#c8c8c8"></div>
<div class="a" style="left:339px;top:211px;width:1px;height:227px;background:#c8c8c8"></div>
<div class="a" style="left:391px;top:211px;width:1px;height:227px;background:#c8c8c8"></div>
<div class="a" style="left:445px;top:211px;width:1px;height:227px;background:#c8c8c8"></div>
<div class="a" style="left:507px;top:211px;width:1px;height:227px;background:#c8c8c8"></div>
<div class="a" style="left:552px;top:211px;width:1px;height:432px;background:#c8c8c8"></div>
<div class="a" style="left:652px;top:211px;width:1px;height:432px;background:#c8c8c8"></div>
<div class="a" style="left:752px;top:211px;width:1px;height:432px;background:#c8c8c8"></div>
<div class="cell" style="left:38px;top:211px">San Marino</div>
<div class="cell r" style="left:127px;top:211px;width:57px">1,067</div>
<div class="cell r" style="left:185px;top:211px;width:71px">32,457</div>
<div class="cell r" style="left:257px;top:211px;width:81px">15,781</div>
<div class="cell r" style="left:339px;top:211px;width:51px">32.874</div>
<div class="cell r" style="left:391px;top:211px;width:53px">68</div>
<div class="cell r" style="left:445px;top:211px;width:61px">13</div>
<div class="cell r" style="left:507px;top:211px;width:44px">4</div>
<div class="cell" style="left:38px;top:226px">Netherlands</div>
<div class="cell r" style="left:127px;top:226px;width:57px">568,068</div>
<div class="cell r" style="left:185px;top:226px;width:71px">16,751,323</div>
<div class="cell r" style="left:257px;top:226px;width:81px">15,371,396</div>
<div class="cell r" style="left:339px;top:226px;width:51px">33.912</div>
<div class="cell r" style="left:391px;top:226px;width:53px">37</div>
<div class="cell r" style="left:445px;top:226px;width:61px">12</div>
<div class="cell r" style="left:507px;top:226px;width:44px">14</div>
<div class="cell" style="left:38px;top:241px">(Malvinas)</div>
<div class="cell r" style="left:127px;top:241px;width:57px">100</div>
<div class="cell r" style="left:185px;top:241px;width:71px">2,563</div>
<div class="cell r" style="left:257px;top:241px;width:81px">2,908</div>
<div class="cell r" style="left:339px;top:241px;width:51px">39.017</div>
<div class="cell r" style="left:391px;top:241px;width:53px">34</div>
<div class="cell r" style="left:445px;top:241px;width:61px">11</div>
<div class="cell r" style="left:507px;top:241px;width:44px">18</div>
<div class="cell" style="left:38px;top:256px">Finland</div>
<div class="cell r" style="left:127px;top:256px;width:57px">212,152</div>
<div class="cell r" style="left:185px;top:256px;width:71px">5,387,000</div>
<div class="cell r" style="left:257px;top:256px;width:81px">4,700,192</div>
<div class="cell r" style="left:339px;top:256px;width:51px">39.382</div>
<div class="cell r" style="left:391px;top:256px;width:53px">45</div>
<div class="cell r" style="left:445px;top:256px;width:61px">10</div>
<div class="cell r" style="left:507px;top:256px;width:44px">10</div>
<div class="cell" style="left:38px;top:271px">Switzerland</div>
<div class="cell r" style="left:127px;top:271px;width:57px">333,002</div>
<div class="cell r" style="left:185px;top:271px;width:71px">8,000,000</div>
<div class="cell r" style="left:257px;top:271px;width:81px">6,688,285</div>
<div class="cell r" style="left:339px;top:271px;width:51px">41.625</div>
<div class="cell r" style="left:391px;top:271px;width:53px">50</div>
<div class="cell r" style="left:445px;top:271px;width:61px">9</div>
<div class="cell r" style="left:507px;top:271px;width:44px">9</div>
<div class="cell" style="left:38px;top:286px">Estonia</div>
<div class="cell r" style="left:127px;top:286px;width:57px">55,255</div>
<div class="cell r" style="left:185px;top:286px;width:71px">1,294,000</div>
<div class="cell r" style="left:257px;top:286px;width:81px">981,467</div>
<div class="cell r" style="left:339px;top:286px;width:51px">42.701</div>
<div class="cell r" style="left:391px;top:286px;width:53px">56</div>
<div class="cell r" style="left:445px;top:286px;width:61px">8</div>
<div class="cell r" style="left:507px;top:286px;width:44px">7</div>
<div class="cell" style="left:38px;top:301px">Germany</div>
<div class="cell r" style="left:127px;top:301px;width:57px">3,602,587</div>
<div class="cell r" style="left:185px;top:301px;width:71px">81,799,600</div>
<div class="cell r" style="left:257px;top:301px;width:81px">67,621,622</div>
<div class="cell r" style="left:339px;top:301px;width:51px">44.042</div>
<div class="cell r" style="left:391px;top:301px;width:53px">53</div>
<div class="cell r" style="left:445px;top:301px;width:61px">7</div>
<div class="cell r" style="left:507px;top:301px;width:44px">8</div>
<div class="cell" style="left:38px;top:316px">Belgium</div>
<div class="cell r" style="left:127px;top:316px;width:57px">529,150</div>
<div class="cell r" style="left:185px;top:316px;width:71px">11,041,266</div>
<div class="cell r" style="left:257px;top:316px;width:81px">8,136,552</div>
<div class="cell r" style="left:339px;top:316px;width:51px">47.925</div>
<div class="cell r" style="left:391px;top:316px;width:53px">65</div>
<div class="cell r" style="left:445px;top:316px;width:61px">6</div>
<div class="cell r" style="left:507px;top:316px;width:44px">6</div>
<div class="cell" style="left:38px;top:331px">Ukraine</div>
<div class="cell r" style="left:127px;top:331px;width:57px">224,151</div>
<div class="cell r" style="left:185px;top:331px;width:71px">4,570,610</div>
<div class="cell r" style="left:257px;top:331px;width:81px">13,811,220</div>
<div class="cell r" style="left:339px;top:331px;width:51px">49.042</div>
<div class="cell r" style="left:391px;top:331px;width:53px">16</div>
<div class="cell r" style="left:445px;top:331px;width:61px">5</div>
<div class="cell r" style="left:507px;top:331px;width:44px">44</div>
<div class="cell" style="left:38px;top:345px">Italy</div>
<div class="cell r" style="left:127px;top:345px;width:57px">3,160,660</div>
<div class="cell r" style="left:185px;top:345px;width:71px">60,813,326</div>
<div class="cell r" style="left:257px;top:345px;width:81px">34,657,545</div>
<div class="cell r" style="left:339px;top:345px;width:51px">51.973</div>
<div class="cell r" style="left:391px;top:345px;width:53px">91</div>
<div class="cell r" style="left:445px;top:345px;width:61px">4</div>
<div class="cell r" style="left:507px;top:345px;width:44px">2</div>
<div class="cell" style="left:38px;top:360px">Luxembourg</div>
<div class="cell r" style="left:127px;top:360px;width:57px">29,788</div>
<div class="cell r" style="left:185px;top:360px;width:71px">517,000</div>
<div class="cell r" style="left:257px;top:360px;width:81px">457,451</div>
<div class="cell r" style="left:339px;top:360px;width:51px">57.617</div>
<div class="cell r" style="left:391px;top:360px;width:53px">65</div>
<div class="cell r" style="left:445px;top:360px;width:61px">3</div>
<div class="cell r" style="left:507px;top:360px;width:44px">5</div>
<div class="cell" style="left:38px;top:375px">Monaco</div>
<div class="cell r" style="left:127px;top:375px;width:57px">2,348</div>
<div class="cell r" style="left:185px;top:375px;width:71px">35,000</div>
<div class="cell r" style="left:257px;top:375px;width:81px">22,940</div>
<div class="cell r" style="left:339px;top:375px;width:51px">67.086</div>
<div class="cell r" style="left:391px;top:375px;width:53px">102</div>
<div class="cell r" style="left:445px;top:375px;width:61px">2</div>
<div class="cell r" style="left:507px;top:375px;width:44px">1</div>
<div class="cell" style="left:38px;top:390px">France</div>
<div class="cell r" style="left:127px;top:390px;width:57px">4,561,852</div>
<div class="cell r" style="left:185px;top:390px;width:71px">65,350,000</div>
<div class="cell r" style="left:257px;top:390px;width:81px">51,962,632</div>
<div class="cell r" style="left:339px;top:390px;width:51px">69.806</div>
<div class="cell r" style="left:391px;top:390px;width:53px">88</div>
<div class="cell r" style="left:445px;top:390px;width:61px">1</div>
<div class="cell r" style="left:507px;top:390px;width:44px">3</div>
<div class="cell" style="left:38px;top:405px">Poland</div>
<div class="cell r" style="left:127px;top:405px;width:57px">113,929</div>
<div class="cell r" style="left:185px;top:405px;width:71px">38,216,000</div>
<div class="cell r" style="left:257px;top:405px;width:81px">24,940,902</div>
<div class="cell r" style="left:339px;top:405px;width:51px">0.470</div>
<div class="cell r" style="left:391px;top:405px;width:53px">5</div>
<div class="cell r" style="left:445px;top:405px;width:61px">133</div>
<div class="cell r" style="left:507px;top:405px;width:44px">126</div>
<div class="cell" style="left:38px;top:420px">Indonesia</div>
<div class="cell r" style="left:127px;top:420px;width:57px">134,095</div>
<div class="cell r" style="left:185px;top:420px;width:71px">242,325,000</div>
<div class="cell r" style="left:257px;top:420px;width:81px">44,291,729</div>
<div class="cell r" style="left:339px;top:420px;width:51px">0.553</div>
<div class="cell r" style="left:391px;top:420px;width:53px">3</div>
<div class="cell r" style="left:445px;top:420px;width:61px">132</div>
<div class="cell r" style="left:507px;top:420px;width:44px">142</div>
<svg style="left:122px;top:244px" width="4" height="6" viewBox="0 0 4 6"><path d="M0 0l4 3l-4 3z" fill="#c00000"/></svg>
<svg style="left:0;top:0" width="1020" height="686"><path d="M62 223.5L64 222.5L66 224.5L68 222.5L70 224.5L72 222.5L74 224.5L76 222.5L78 224.5L80 222.5L82 224.5L84 222.5L86 224.5L88 222.5L90 224.5L92 222.5L94 224.5L96 222.5" stroke="#e02020" stroke-width="0.9" fill="none"/></svg>
<svg style="left:0;top:0" width="1020" height="686"><path d="M39 253.5L41 252.5L43 254.5L45 252.5L47 254.5L49 252.5L51 254.5L53 252.5L55 254.5L57 252.5L59 254.5L61 252.5L63 254.5L65 252.5L67 254.5L69 252.5L71 254.5L73 252.5L75 254.5L77 252.5L79 254.5L81 252.5L83 254.5L85 252.5L87 254.5L89 252.5" stroke="#e02020" stroke-width="0.9" fill="none"/></svg>
<div class="a" style="left:9px;top:211px;width:28px;text-align:center;font-size:11.5px;color:#2a2a2a;line-height:15px;letter-spacing:-1.1px">188</div>
<div class="a" style="left:9px;top:224px;width:28px;height:1px;background:#8e8e8e"></div>
<div class="a" style="left:9px;top:225px;width:28px;height:1px;background:#fbfbfb"></div>
<div class="a" style="left:9px;top:226px;width:28px;text-align:center;font-size:11.5px;color:#2a2a2a;line-height:15px;letter-spacing:-1.1px">189</div>
<div class="a" style="left:9px;top:239px;width:28px;height:1px;background:#8e8e8e"></div>
<div class="a" style="left:9px;top:240px;width:28px;height:1px;background:#fbfbfb"></div>
<div class="a" style="left:9px;top:241px;width:28px;text-align:center;font-size:11.5px;color:#2a2a2a;line-height:15px;letter-spacing:-1.1px">190</div>
<div class="a" style="left:9px;top:254px;width:28px;height:1px;background:#8e8e8e"></div>
<div class="a" style="left:9px;top:255px;width:28px;height:1px;background:#fbfbfb"></div>
<div class="a" style="left:9px;top:256px;width:28px;text-align:center;font-size:11.5px;color:#2a2a2a;line-height:15px;letter-spacing:-1.1px">191</div>
<div class="a" style="left:9px;top:269px;width:28px;height:1px;background:#8e8e8e"></div>
<div class="a" style="left:9px;top:270px;width:28px;height:1px;background:#fbfbfb"></div>
<div class="a" style="left:9px;top:271px;width:28px;text-align:center;font-size:11.5px;color:#2a2a2a;line-height:15px;letter-spacing:-1.1px">192</div>
<div class="a" style="left:9px;top:284px;width:28px;height:1px;background:#8e8e8e"></div>
<div class="a" style="left:9px;top:285px;width:28px;height:1px;background:#fbfbfb"></div>
<div class="a" style="left:9px;top:286px;width:28px;text-align:center;font-size:11.5px;color:#2a2a2a;line-height:15px;letter-spacing:-1.1px">193</div>
<div class="a" style="left:9px;top:299px;width:28px;height:1px;background:#8e8e8e"></div>
<div class="a" style="left:9px;top:300px;width:28px;height:1px;background:#fbfbfb"></div>
<div class="a" style="left:9px;top:301px;width:28px;text-align:center;font-size:11.5px;color:#2a2a2a;line-height:15px;letter-spacing:-1.1px">194</div>
<div class="a" style="left:9px;top:314px;width:28px;height:1px;background:#8e8e8e"></div>
<div class="a" style="left:9px;top:315px;width:28px;height:1px;background:#fbfbfb"></div>
<div class="a" style="left:9px;top:316px;width:28px;text-align:center;font-size:11.5px;color:#2a2a2a;line-height:15px;letter-spacing:-1.1px">195</div>
<div class="a" style="left:9px;top:329px;width:28px;height:1px;background:#8e8e8e"></div>
<div class="a" style="left:9px;top:330px;width:28px;height:1px;background:#fbfbfb"></div>
<div class="a" style="left:9px;top:331px;width:28px;text-align:center;font-size:11.5px;color:#2a2a2a;line-height:15px;letter-spacing:-1.1px">196</div>
<div class="a" style="left:9px;top:344px;width:28px;height:1px;background:#8e8e8e"></div>
<div class="a" style="left:9px;top:345px;width:28px;height:1px;background:#fbfbfb"></div>
<div class="a" style="left:9px;top:345px;width:28px;text-align:center;font-size:11.5px;color:#2a2a2a;line-height:15px;letter-spacing:-1.1px">197</div>
<div class="a" style="left:9px;top:358px;width:28px;height:1px;background:#8e8e8e"></div>
<div class="a" style="left:9px;top:359px;width:28px;height:1px;background:#fbfbfb"></div>
<div class="a" style="left:9px;top:360px;width:28px;text-align:center;font-size:11.5px;color:#2a2a2a;line-height:15px;letter-spacing:-1.1px">198</div>
<div class="a" style="left:9px;top:373px;width:28px;height:1px;background:#8e8e8e"></div>
<div class="a" style="left:9px;top:374px;width:28px;height:1px;background:#fbfbfb"></div>
<div class="a" style="left:9px;top:375px;width:28px;text-align:center;font-size:11.5px;color:#2a2a2a;line-height:15px;letter-spacing:-1.1px">199</div>
<div class="a" style="left:9px;top:388px;width:28px;height:1px;background:#8e8e8e"></div>
<div class="a" style="left:9px;top:388px;width:28px;height:16px;background:linear-gradient(90deg,#7cb9f7 0%,#6fb2f6 45%,#3b93f2 50%,#3790f0 100%)"></div>
<div class="a" style="left:9px;top:390px;width:28px;text-align:center;font-size:11.5px;font-weight:bold;color:#fff;line-height:15px;letter-spacing:-0.8px">200</div>
<div class="a" style="left:9px;top:405px;width:28px;text-align:center;font-size:11.5px;color:#2a2a2a;line-height:15px;letter-spacing:-1.1px">201</div>
<div class="a" style="left:9px;top:418px;width:28px;height:1px;background:#8e8e8e"></div>
<div class="a" style="left:9px;top:419px;width:28px;height:1px;background:#fbfbfb"></div>
<div class="a" style="left:9px;top:420px;width:28px;text-align:center;font-size:11.5px;color:#2a2a2a;line-height:15px;letter-spacing:-1.1px">202</div>
<div class="a" style="left:9px;top:433px;width:28px;height:1px;background:#8e8e8e"></div>
<div class="a" style="left:9px;top:434px;width:28px;height:1px;background:#fbfbfb"></div>
<div class="a" style="left:9px;top:435px;width:28px;text-align:center;font-size:11.5px;color:#2a2a2a;line-height:15px;letter-spacing:-1.1px">203</div>
<div class="a" style="left:9px;top:448px;width:28px;height:1px;background:#8e8e8e"></div>
<div class="a" style="left:9px;top:449px;width:28px;height:1px;background:#fbfbfb"></div>
<div class="a" style="left:9px;top:450px;width:28px;text-align:center;font-size:11.5px;color:#2a2a2a;line-height:15px;letter-spacing:-1.1px">204</div>
<div class="a" style="left:9px;top:463px;width:28px;height:1px;background:#8e8e8e"></div>
<div class="a" style="left:9px;top:464px;width:28px;height:1px;background:#fbfbfb"></div>
<div class="a" style="left:9px;top:465px;width:28px;text-align:center;font-size:11.5px;color:#2a2a2a;line-height:15px;letter-spacing:-1.1px">205</div>
<div class="a" style="left:9px;top:478px;width:28px;height:1px;background:#8e8e8e"></div>
<div class="a" style="left:9px;top:479px;width:28px;height:1px;background:#fbfbfb"></div>
<div class="a" style="left:9px;top:480px;width:28px;text-align:center;font-size:11.5px;color:#2a2a2a;line-height:15px;letter-spacing:-1.1px">206</div>
<div class="a" style="left:9px;top:493px;width:28px;height:1px;background:#8e8e8e"></div>
<div class="a" style="left:9px;top:494px;width:28px;height:1px;background:#fbfbfb"></div>
<div class="a" style="left:9px;top:495px;width:28px;text-align:center;font-size:11.5px;color:#2a2a2a;line-height:15px;letter-spacing:-1.1px">207</div>
<div class="a" style="left:9px;top:508px;width:28px;height:1px;background:#8e8e8e"></div>
<div class="a" style="left:9px;top:509px;width:28px;height:1px;background:#fbfbfb"></div>
<div class="a" style="left:9px;top:510px;width:28px;text-align:center;font-size:11.5px;color:#2a2a2a;line-height:15px;letter-spacing:-1.1px">208</div>
<div class="a" style="left:9px;top:523px;width:28px;height:1px;background:#8e8e8e"></div>
<div class="a" style="left:9px;top:524px;width:28px;height:1px;background:#fbfbfb"></div>
<div class="a" style="left:9px;top:525px;width:28px;text-align:center;font-size:11.5px;color:#2a2a2a;line-height:15px;letter-spacing:-1.1px">209</div>
<div class="a" style="left:9px;top:538px;width:28px;height:1px;background:#8e8e8e"></div>
<div class="a" style="left:9px;top:539px;width:28px;height:1px;background:#fbfbfb"></div>
<div class="a" style="left:9px;top:540px;width:28px;text-align:center;font-size:11.5px;color:#2a2a2a;line-height:15px;letter-spacing:-1.1px">210</div>
<div class="a" style="left:9px;top:553px;width:28px;height:1px;background:#8e8e8e"></div>
<div class="a" style="left:9px;top:554px;width:28px;height:1px;background:#fbfbfb"></div>
<div class="a" style="left:9px;top:554px;width:28px;text-align:center;font-size:11.5px;color:#2a2a2a;line-height:15px;letter-spacing:-1.1px">211</div>
<div class="a" style="left:9px;top:567px;width:28px;height:1px;background:#8e8e8e"></div>
<div class="a" style="left:9px;top:568px;width:28px;height:1px;background:#fbfbfb"></div>
<div class="a" style="left:9px;top:569px;width:28px;text-align:center;font-size:11.5px;color:#2a2a2a;line-height:15px;letter-spacing:-1.1px">212</div>
<div class="a" style="left:9px;top:582px;width:28px;height:1px;background:#8e8e8e"></div>
<div class="a" style="left:9px;top:583px;width:28px;height:1px;background:#fbfbfb"></div>
<div class="a" style="left:9px;top:584px;width:28px;text-align:center;font-size:11.5px;color:#2a2a2a;line-height:15px;letter-spacing:-1.1px">213</div>
<div class="a" style="left:9px;top:597px;width:28px;height:1px;background:#8e8e8e"></div>
<div class="a" style="left:9px;top:598px;width:28px;height:1px;background:#fbfbfb"></div>
<div class="a" style="left:9px;top:599px;width:28px;text-align:center;font-size:11.5px;color:#2a2a2a;line-height:15px;letter-spacing:-1.1px">214</div>
<div class="a" style="left:9px;top:612px;width:28px;height:1px;background:#8e8e8e"></div>
<div class="a" style="left:9px;top:613px;width:28px;height:1px;background:#fbfbfb"></div>
<div class="a" style="left:9px;top:614px;width:28px;text-align:center;font-size:11.5px;color:#2a2a2a;line-height:15px;letter-spacing:-1.1px">215</div>
<div class="a" style="left:9px;top:627px;width:28px;height:1px;background:#8e8e8e"></div>
<div class="a" style="left:9px;top:628px;width:28px;height:1px;background:#fbfbfb"></div>
<div class="a" style="left:9px;top:629px;width:28px;text-align:center;font-size:11.5px;color:#2a2a2a;line-height:15px;letter-spacing:-1.1px">216</div>
<div class="a" style="left:9px;top:642px;width:28px;height:1px;background:#8e8e8e"></div>
<div class="a" style="left:9px;top:643px;width:28px;height:1px;background:#fbfbfb"></div>
<div class="a" style="left:444px;top:388px;width:65px;height:16px;border:2px solid #000"></div>
<div class="a" style="left:506px;top:403px;width:5px;height:5px;background:#000"></div>
<div class="a" style="left:38px;top:437px;width:505px;height:206px;background:#fff"></div>
<div class="a" style="left:38px;top:450px;width:505px;text-align:center;font-size:14px;color:#222;line-height:18px;letter-spacing:-0.1px">Downloads Per Country</div>
<svg style="left:0;top:0" width="1020" height="686" shape-rendering="crispEdges"><path d="M99 595.0H525" stroke="#b3b3b3" stroke-width="1"/><path d="M99 573.2H525" stroke="#b3b3b3" stroke-width="1"/><path d="M99 551.4H525" stroke="#b3b3b3" stroke-width="1"/><path d="M99 529.6H525" stroke="#b3b3b3" stroke-width="1"/><path d="M99 507.8H525" stroke="#b3b3b3" stroke-width="1"/><path d="M99 486.0H525" stroke="#b3b3b3" stroke-width="1"/><path d="M104 486V600M525 486V595" stroke="#b3b3b3" stroke-width="1"/><path d="M104.0 595V600" stroke="#b3b3b3" stroke-width="1"/><path d="M130.3 595V600" stroke="#b3b3b3" stroke-width="1"/><path d="M156.6 595V600" stroke="#b3b3b3" stroke-width="1"/><path d="M182.9 595V600" stroke="#b3b3b3" stroke-width="1"/><path d="M209.2 595V600" stroke="#b3b3b3" stroke-width="1"/><path d="M235.6 595V600" stroke="#b3b3b3" stroke-width="1"/><path d="M261.9 595V600" stroke="#b3b3b3" stroke-width="1"/><path d="M288.2 595V600" stroke="#b3b3b3" stroke-width="1"/><path d="M314.5 595V600" stroke="#b3b3b3" stroke-width="1"/><path d="M340.8 595V600" stroke="#b3b3b3" stroke-width="1"/><path d="M367.1 595V600" stroke="#b3b3b3" stroke-width="1"/><path d="M393.4 595V600" stroke="#b3b3b3" stroke-width="1"/><path d="M419.8 595V600" stroke="#b3b3b3" stroke-width="1"/><path d="M446.1 595V600" stroke="#b3b3b3" stroke-width="1"/><path d="M472.4 595V600" stroke="#b3b3b3" stroke-width="1"/><path d="M498.7 595V600" stroke="#b3b3b3" stroke-width="1"/><path d="M525.0 595V600" stroke="#b3b3b3" stroke-width="1"/><rect x="110.7" y="590.4" width="13" height="4.6" fill="#004586"/><rect x="137.0" y="589.4" width="13" height="5.6" fill="#004586"/><rect x="163.3" y="572.1" width="13" height="22.9" fill="#004586"/><rect x="189.6" y="595.0" width="13" height="0.0" fill="#004586"/><rect x="215.9" y="582.6" width="13" height="12.4" fill="#004586"/><rect x="242.2" y="595.0" width="13" height="0.0" fill="#004586"/><rect x="268.5" y="590.4" width="13" height="4.6" fill="#004586"/><rect x="294.8" y="587.7" width="13" height="7.3" fill="#004586"/><rect x="321.2" y="593.8" width="13" height="1.2" fill="#004586"/><rect x="347.5" y="516.5" width="13" height="78.5" fill="#004586"/><rect x="373.8" y="583.5" width="13" height="11.5" fill="#004586"/><rect x="400.1" y="590.1" width="13" height="4.9" fill="#004586"/><rect x="426.4" y="526.1" width="13" height="68.9" fill="#004586"/><rect x="452.7" y="594.4" width="13" height="0.6" fill="#004586"/><rect x="479.0" y="594.9" width="13" height="0.1" fill="#004586"/><rect x="505.3" y="495.6" width="13" height="99.4" fill="#004586"/></svg>
<div class="a" style="left:30px;top:478.0px;width:66px;text-align:right;font-size:12px;letter-spacing:-0.5px;color:#222;line-height:16px">5,000,000</div>
<div class="a" style="left:30px;top:499.8px;width:66px;text-align:right;font-size:12px;letter-spacing:-0.5px;color:#222;line-height:16px">4,000,000</div>
<div class="a" style="left:30px;top:521.6px;width:66px;text-align:right;font-size:12px;letter-spacing:-0.5px;color:#222;line-height:16px">3,000,000</div>
<div class="a" style="left:30px;top:543.4px;width:66px;text-align:right;font-size:12px;letter-spacing:-0.5px;color:#222;line-height:16px">2,000,000</div>
<div class="a" style="left:30px;top:565.2px;width:66px;text-align:right;font-size:12px;letter-spacing:-0.5px;color:#222;line-height:16px">1,000,000</div>
<div class="a" style="left:30px;top:587.0px;width:66px;text-align:right;font-size:12px;letter-spacing:-0.5px;color:#222;line-height:16px">0</div>
<div class="a" style="left:38px;top:600px;width:505px;height:43px;overflow:hidden">
<div class="a" style="left:71.2px;top:2px;width:16px;height:16px;transform-origin:8px 8px;transform:rotate(90deg)"><div style="position:absolute;left:0;top:0;font-size:12px;line-height:16px;color:#222;white-space:nowrap;letter-spacing:-0.7px">Hong Kong</div></div>
<div class="a" style="left:97.5px;top:2px;width:16px;height:16px;transform-origin:8px 8px;transform:rotate(90deg)"><div style="position:absolute;left:0;top:0;font-size:12px;line-height:16px;color:#222;white-space:nowrap;letter-spacing:-0.7px">Austria</div></div>
<div class="a" style="left:123.8px;top:2px;width:16px;height:16px;transform-origin:8px 8px;transform:rotate(90deg)"><div style="position:absolute;left:0;top:0;font-size:12px;line-height:16px;color:#222;white-space:nowrap;letter-spacing:-0.7px">Canada</div></div>
<div class="a" style="left:150.1px;top:2px;width:16px;height:16px;transform-origin:8px 8px;transform:rotate(90deg)"><div style="position:absolute;left:0;top:0;font-size:12px;line-height:16px;color:#222;white-space:nowrap;letter-spacing:-0.7px">San Marino</div></div>
<div class="a" style="left:176.4px;top:2px;width:16px;height:16px;transform-origin:8px 8px;transform:rotate(90deg)"><div style="position:absolute;left:0;top:0;font-size:12px;line-height:16px;color:#222;white-space:nowrap;letter-spacing:-0.7px">Netherlands</div></div>
<div class="a" style="left:202.7px;top:2px;width:16px;height:16px;transform-origin:8px 8px;transform:rotate(90deg)"><div style="position:absolute;left:0;top:0;font-size:12px;line-height:16px;color:#222;white-space:nowrap;letter-spacing:-0.7px">Falkland Islands</div></div>
<div class="a" style="left:229.0px;top:2px;width:16px;height:16px;transform-origin:8px 8px;transform:rotate(90deg)"><div style="position:absolute;left:0;top:0;font-size:12px;line-height:16px;color:#222;white-space:nowrap;letter-spacing:-0.7px">Finland</div></div>
<div class="a" style="left:255.3px;top:2px;width:16px;height:16px;transform-origin:8px 8px;transform:rotate(90deg)"><div style="position:absolute;left:0;top:0;font-size:12px;line-height:16px;color:#222;white-space:nowrap;letter-spacing:-0.7px">Switzerland</div></div>
<div class="a" style="left:281.7px;top:2px;width:16px;height:16px;transform-origin:8px 8px;transform:rotate(90deg)"><div style="position:absolute;left:0;top:0;font-size:12px;line-height:16px;color:#222;white-space:nowrap;letter-spacing:-0.7px">Estonia</div></div>
<div class="a" style="left:308.0px;top:2px;width:16px;height:16px;transform-origin:8px 8px;transform:rotate(90deg)"><div style="position:absolute;left:0;top:0;font-size:12px;line-height:16px;color:#222;white-space:nowrap;letter-spacing:-0.7px">Germany</div></div>
<div class="a" style="left:334.3px;top:2px;width:16px;height:16px;transform-origin:8px 8px;transform:rotate(90deg)"><div style="position:absolute;left:0;top:0;font-size:12px;line-height:16px;color:#222;white-space:nowrap;letter-spacing:-0.7px">Belgium</div></div>
<div class="a" style="left:360.6px;top:2px;width:16px;height:16px;transform-origin:8px 8px;transform:rotate(90deg)"><div style="position:absolute;left:0;top:0;font-size:12px;line-height:16px;color:#222;white-space:nowrap;letter-spacing:-0.7px">Ukraine</div></div>
<div class="a" style="left:386.9px;top:2px;width:16px;height:16px;transform-origin:8px 8px;transform:rotate(90deg)"><div style="position:absolute;left:0;top:0;font-size:12px;line-height:16px;color:#222;white-space:nowrap;letter-spacing:-0.7px">Italy</div></div>
<div class="a" style="left:413.2px;top:2px;width:16px;height:16px;transform-origin:8px 8px;transform:rotate(90deg)"><div style="position:absolute;left:0;top:0;font-size:12px;line-height:16px;color:#222;white-space:nowrap;letter-spacing:-0.7px">Luxembourg</div></div>
<div class="a" style="left:439.5px;top:2px;width:16px;height:16px;transform-origin:8px 8px;transform:rotate(90deg)"><div style="position:absolute;left:0;top:0;font-size:12px;line-height:16px;color:#222;white-space:nowrap;letter-spacing:-0.7px">Monaco</div></div>
<div class="a" style="left:465.8px;top:2px;width:16px;height:16px;transform-origin:8px 8px;transform:rotate(90deg)"><div style="position:absolute;left:0;top:0;font-size:12px;line-height:16px;color:#222;white-space:nowrap;letter-spacing:-0.7px">France</div></div>
</div>
<div class="a" style="left:761px;top:131px;width:15px;height:528px;background:#f0f0f0"></div>
<svg style="left:765px;top:137px" width="9" height="6" viewBox="0 0 9 6"><path d="M0.8 5l3.7-3.7l3.7 3.7" stroke="#444" stroke-width="1.5" fill="none"/></svg>
<div class="a" style="left:762px;top:511px;width:13px;height:56px;background:#cdcdcd"></div>
<svg style="left:765px;top:633px" width="9" height="6" viewBox="0 0 9 6"><path d="M0.8 1l3.7 3.7l3.7-3.7" stroke="#444" stroke-width="1.5" fill="none"/></svg>
<div class="a" style="left:8px;top:643px;width:769px;height:16px;background:#f0f0f0"></div>
<div class="a" style="left:10px;top:645px;width:14px;height:12px;background:#e9e9e9;border:1px solid #e2e2e2"></div>
<div class="a" style="left:24px;top:645px;width:14px;height:12px;background:#e9e9e9;border:1px solid #e2e2e2"></div>
<div class="a" style="left:39px;top:645px;width:14px;height:12px;background:#e9e9e9;border:1px solid #e2e2e2"></div>
<div class="a" style="left:54px;top:645px;width:14px;height:12px;background:#e9e9e9;border:1px solid #e2e2e2"></div>
<svg style="left:12px;top:647px" width="10" height="8" viewBox="0 0 10 8"><path d="M1.5 0v8" stroke="#a8a8a8"/><path d="M8 0.5v7l-5-3.5z" fill="#b0b0b0"/></svg>
<svg style="left:27px;top:647px" width="8" height="8" viewBox="0 0 8 8"><path d="M6 0.5v7l-5-3.5z" fill="#b0b0b0"/></svg>
<svg style="left:42px;top:647px" width="8" height="8" viewBox="0 0 8 8"><path d="M2 0.5v7l5-3.5z" fill="#b0b0b0"/></svg>
<svg style="left:56px;top:647px" width="10" height="8" viewBox="0 0 10 8"><path d="M8.5 0v8" stroke="#a8a8a8"/><path d="M2 0.5v7l5-3.5z" fill="#b0b0b0"/></svg>
<svg style="left:0;top:0" width="1020" height="686"><path d="M68.5 643.5L74.5 657.5H127L131 643.5z" fill="#fcfcfc"/><path d="M68.5 643.5L74.5 657.5" stroke="#444" stroke-width="1" fill="none"/><path d="M74 657H126" stroke="#0a1ee0" stroke-width="2"/><path d="M131 644.5H217.5L212.8 657.5H126.5z" fill="#0cbf0c" stroke="#6a6a6a" stroke-width="1"/><path d="M218.5 644.5H278.5L273.3 657.5H215.9z" fill="#ff6a0a" stroke="#6a6a6a" stroke-width="1"/></svg>
<div class="a" style="left:76px;top:644px;font-size:10px;font-weight:bold;color:#111;line-height:16px">Summary</div>
<div class="a" style="left:134px;top:644px;font-size:10px;font-weight:bold;color:#fff;line-height:16px">Supporting Data</div>
<div class="a" style="left:221px;top:644px;font-size:10px;color:#1a1000;line-height:16px">Older Data</div>
<svg style="left:0;top:0" width="1020" height="686"><path d="M278 644.5H529.5V657.5H534.5V644" stroke="#666" stroke-width="1" fill="none"/><path d="M531 645v12M533 645v12" stroke="#fff" stroke-width="1"/></svg>
<div class="a" style="left:536px;top:644px;width:225px;height:15px;background:#f0f0f0"></div>
<svg style="left:539px;top:647px" width="6" height="9" viewBox="0 0 6 9"><path d="M5 0.8L1.3 4.5L5 8.2" stroke="#444" stroke-width="1.5" fill="none"/></svg>
<div class="a" style="left:549px;top:645px;width:69px;height:13px;background:#cdcdcd"></div>
<svg style="left:748px;top:647px" width="6" height="9" viewBox="0 0 6 9"><path d="M1 0.8L4.7 4.5L1 8.2" stroke="#444" stroke-width="1.5" fill="none"/></svg>
<div class="a" style="left:758px;top:645px;width:3px;height:13px;background:#111"></div>
<div class="a" style="left:8px;top:131px;width:1px;height:528px;background:#8e8e8e"></div>
<div class="a" style="left:7px;top:659px;width:1006px;height:20px;background:#f0f0f0;border-top:1px solid #e2e2e2"></div>
<div class="a" style="left:192px;top:663px;width:1px;height:14px;background:#a4a4a4"></div>
<div class="a" style="left:396px;top:663px;width:1px;height:14px;background:#a4a4a4"></div>
<div class="a" style="left:443px;top:663px;width:1px;height:14px;background:#a4a4a4"></div>
<div class="a" style="left:484px;top:663px;width:1px;height:14px;background:#a4a4a4"></div>
<div class="a" style="left:500px;top:663px;width:1px;height:14px;background:#a4a4a4"></div>
<div class="a" style="left:525px;top:663px;width:1px;height:14px;background:#a4a4a4"></div>
<div class="a" style="left:841px;top:663px;width:1px;height:14px;background:#a4a4a4"></div>
<div class="a" style="left:975px;top:663px;width:1px;height:14px;background:#a4a4a4"></div>
<div class="a ui" style="left:16px;top:663px;font-size:11px;line-height:16px;color:#222;letter-spacing:-0.5px">Sheet 1 / 3</div>
<div class="a ui" style="left:197px;top:663px;font-size:11px;line-height:16px;color:#222;letter-spacing:-0.7px">PageStyle_Sheet1</div>
<div class="a ui" style="left:453px;top:663px;font-size:11.5px;line-height:16px;color:#222;letter-spacing:-0.9px">STD</div>
<div class="a ui" style="left:488px;top:663px;font-size:10px;line-height:14px;color:#222">*</div>
<div class="a ui" style="left:664px;top:663px;font-size:12px;line-height:16px;color:#222;letter-spacing:-0.5px">Sum=1</div>
<svg style="left:845px;top:664px" width="13" height="13" viewBox="0 0 13 13"><circle cx="6.5" cy="6.5" r="5.5" fill="#dfe8f0" stroke="#5a7896" stroke-width="1.2"/><path d="M3.5 6.5h6" stroke="#2b4a6a" stroke-width="1.4"/></svg>
<div class="a" style="left:861px;top:669px;width:93px;height:1px;background:#8e959c"></div>
<div class="a" style="left:861px;top:670px;width:93px;height:1px;background:#fdfdfd"></div>
<svg style="left:902px;top:666px" width="8" height="9" viewBox="0 0 8 9"><path d="M1 1.5Q4 0 7 1.5V5.5L4 8.5L1 5.5z" fill="#6f8ba6" stroke="#3f5a76" stroke-width="0.9"/></svg>
<svg style="left:957px;top:664px" width="13" height="13" viewBox="0 0 13 13"><circle cx="6.5" cy="6.5" r="5.5" fill="#dfe8f0" stroke="#5a7896" stroke-width="1.2"/><path d="M3.5 6.5h6M6.5 3.5v6" stroke="#2b4a6a" stroke-width="1.4"/></svg>
<div class="a ui" style="left:979px;top:663px;font-size:11.5px;line-height:16px;color:#222;letter-spacing:-0.8px">100%</div>
<div class="a" style="left:777px;top:103px;width:236px;height:556px;background:#f0f0f0"></div>
<div class="a" style="left:782px;top:102px;width:1px;height:557px;background:#a0a0a0"></div>
<div class="a" style="left:783px;top:102px;width:229px;height:557px;border:1px solid #9a9a9a;border-left:none;box-shadow:inset 0 1px 0 #fff"></div>
<svg style="left:778px;top:365px" width="4" height="31" viewBox="0 0 4 31"><path d="M0.5 0l2 1.5l-2 1.5z" fill="#555"/><path d="M1 7v16" stroke="#666" stroke-dasharray="1 2"/><path d="M0.5 27l2 1.5l-2 1.5z" fill="#555"/></svg>
<div class="a" style="left:786px;top:105px;width:192px;height:551px;background:#efefef;border:1px solid #e2e2e2"></div>
<div class="a" style="left:795px;top:109px;font-size:11.5px;font-weight:bold;color:#111;line-height:18px;letter-spacing:-0.5px">Properties</div>
<svg style="left:964px;top:112px" width="9" height="9" viewBox="0 0 9 9"><path d="M0.8 0.8L8.2 8.2M8.2 0.8L0.8 8.2" stroke="#333" stroke-width="1.4"/></svg>
<div class="a" style="left:787px;top:129px;width:190px;height:22px;background:linear-gradient(#dedede,#efefef);border-bottom:1px solid #e4e4e4"></div>
<svg style="left:791px;top:136.5px" width="10" height="10" viewBox="0 0 10 10"><rect x="0.5" y="0.5" width="9" height="9" fill="#f4f6f8" stroke="#5b7590"/><path d="M2.5 5h5" stroke="#333" stroke-width="1.2"/></svg>
<div class="a" style="left:803px;top:132.5px;font-size:11.5px;font-weight:bold;color:#151515;line-height:18px;letter-spacing:-0.6px">Text</div>
<svg style="left:962px;top:132.0px" width="12" height="11" viewBox="0 0 12 11"><rect x="0.5" y="0.5" width="11" height="10" fill="#f6f8fb" stroke="#4a7fc0"/><path d="M0.5 2.5h11" stroke="#4a7fc0" stroke-width="2"/><path d="M3 7.5h1M5.5 7.5h1M8 7.5h1" stroke="#4a7fc0"/></svg>
<div class="a" style="left:792px;top:154px;width:127px;height:21px;background:#fff;border:1px solid #a9aeb4"></div>
<div class="a ui" style="left:796px;top:155px;font-size:11px;color:#1a1a1a;line-height:21px;letter-spacing:-0.5px">Arial</div>
<div class="a" style="left:903px;top:156px;width:14px;height:17px;background:#e9e9e9;border:1px solid #8f9499;box-shadow:inset 1px 1px 0 #fbfbfb"></div>
<svg style="left:907.0px;top:162.5px" width="8" height="5" viewBox="0 0 8 5"><path d="M0.5 0.5l3.5 3.5l3.5-3.5" stroke="#3a3a3a" stroke-width="1.4" fill="none"/></svg>
<div class="a" style="left:924px;top:154px;width:45px;height:21px;background:#fff;border:1px solid #a9aeb4"></div>
<div class="a ui" style="left:928px;top:155px;font-size:11px;color:#1a1a1a;line-height:21px;letter-spacing:-0.5px">10</div>
<div class="a" style="left:953px;top:156px;width:14px;height:17px;background:#e9e9e9;border:1px solid #8f9499;box-shadow:inset 1px 1px 0 #fbfbfb"></div>
<svg style="left:957.0px;top:162.5px" width="8" height="5" viewBox="0 0 8 5"><path d="M0.5 0.5l3.5 3.5l3.5-3.5" stroke="#3a3a3a" stroke-width="1.4" fill="none"/></svg>
<div class="a" style="left:792px;top:183px;width:123px;height:27px;background:linear-gradient(#fbfbfb,#f1f1f1);border:1px solid #e3e3e3;border-radius:2px"></div>
<div class="a" style="left:800px;top:186px;font-size:16px;font-weight:bold;color:#1d3550;line-height:20px">B</div>
<div class="a" style="left:823px;top:186px;font-size:16px;font-style:italic;font-weight:bold;color:#1d3550;line-height:20px;font-family:'Liberation Serif'">I</div>
<div class="a" style="left:843px;top:186px;font-size:14px;color:#1d3550;line-height:19px">U</div>
<div class="a" style="left:843px;top:202px;width:11px;height:1px;background:#1d3550"></div>
<svg style="left:860.5px;top:193.5px" width="5" height="3" viewBox="0 0 5 3"><path d="M0 0h5L2.5 3z" fill="#111"/></svg>
<svg style="left:872px;top:192px" width="14" height="8" viewBox="0 0 14 8"><text x="0" y="7" font-size="6" font-weight="bold" fill="#3a4a5a" font-family="Liberation Sans">ABC</text><path d="M0 4h13" stroke="#3a4a5a" stroke-width="0.8"/></svg>
<svg style="left:894px;top:188px" width="16" height="16" viewBox="0 0 16 16"><text x="0" y="14" font-size="15" font-weight="bold" fill="#3c78b4" font-family="Liberation Sans">A</text><text x="4" y="15" font-size="13" font-weight="bold" fill="#9aa3ab" font-family="Liberation Sans" opacity="0.8">A</text></svg>
<div class="a" style="left:924px;top:183px;width:48px;height:27px;background:linear-gradient(#fbfbfb,#f1f1f1);border:1px solid #e3e3e3;border-radius:2px"></div>
<svg style="left:929px;top:188px" width="17" height="17" viewBox="0 0 17 17"><path d="M1 3v13M3 3v13" stroke="#8d9aa8" stroke-width="1"/><text x="4" y="16" font-size="12" font-weight="bold" fill="#3c6ea8" font-family="Liberation Sans">A</text><path d="M9 4l3-3l3 3z" fill="#e06a2a"/></svg>
<svg style="left:951px;top:188px" width="17" height="17" viewBox="0 0 17 17"><path d="M1 3v13M3 3v13" stroke="#8d9aa8" stroke-width="1"/><text x="4" y="16" font-size="11" font-weight="bold" fill="#3c6ea8" font-family="Liberation Sans">A</text><path d="M9 1l3 3l3-3z" fill="#e06a2a"/></svg>
<div class="a" style="left:792px;top:218px;width:47px;height:27px;background:linear-gradient(#fbfbfb,#f1f1f1);border:1px solid #e3e3e3;border-radius:2px"></div>
<svg style="left:797px;top:223px" width="15" height="16" viewBox="0 0 15 16"><text x="0" y="14" font-size="13" fill="#bcc2c8" font-family="Liberation Sans">A</text><text x="7" y="11" font-size="8" fill="#bcc2c8" font-family="Liberation Sans">C</text></svg>
<svg style="left:819px;top:223px" width="15" height="16" viewBox="0 0 15 16"><text x="0" y="14" font-size="13" fill="#bcc2c8" font-family="Liberation Sans">A</text><path d="M9 3l2-2l2 2" stroke="#bcc2c8" fill="none"/></svg>
<div class="a" style="left:846px;top:218px;width:36px;height:27px;background:linear-gradient(#fbfbfb,#f1f1f1);border:1px solid #e3e3e3;border-radius:2px"></div>
<svg style="left:850px;top:224px" width="16" height="14" viewBox="0 0 16 14"><text x="0" y="7" font-size="8" fill="#bcc2c8" font-family="Liberation Sans">AV</text><path d="M1 10h12M1 10l2-2M1 10l2 2M13 10l-2-2M13 10l-2 2" stroke="#bcc2c8" fill="none"/></svg>
<svg style="left:871.5px;top:229.5px" width="5" height="3" viewBox="0 0 5 3"><path d="M0 0h5L2.5 3z" fill="#b8bcc0"/></svg>
<div class="a" style="left:896px;top:218px;width:35px;height:27px;background:linear-gradient(#fbfbfb,#f1f1f1);border:1px solid #e3e3e3;border-radius:2px"></div>
<svg style="left:901px;top:222px" width="15" height="18" viewBox="0 0 15 18"><text x="7" y="12" font-size="12" font-weight="bold" fill="#2b5c8e" text-anchor="middle" font-family="Liberation Sans">A</text><rect x="1" y="13.5" width="12" height="3" fill="#fff" stroke="#222"/></svg>
<svg style="left:921.5px;top:229.5px" width="5" height="3" viewBox="0 0 5 3"><path d="M0 0h5L2.5 3z" fill="#111"/></svg>
<div class="a" style="left:787px;top:250px;width:190px;height:22px;background:linear-gradient(#dedede,#efefef);border-bottom:1px solid #e4e4e4"></div>
<svg style="left:791px;top:257.5px" width="10" height="10" viewBox="0 0 10 10"><rect x="0.5" y="0.5" width="9" height="9" fill="#f4f6f8" stroke="#5b7590"/><path d="M2.5 5h5" stroke="#333" stroke-width="1.2"/></svg>
<div class="a" style="left:803px;top:253.5px;font-size:11.5px;font-weight:bold;color:#151515;line-height:18px;letter-spacing:-0.6px">Alignment</div>
<svg style="left:962px;top:253.0px" width="12" height="11" viewBox="0 0 12 11"><rect x="0.5" y="0.5" width="11" height="10" fill="#f6f8fb" stroke="#4a7fc0"/><path d="M0.5 2.5h11" stroke="#4a7fc0" stroke-width="2"/><path d="M3 7.5h1M5.5 7.5h1M8 7.5h1" stroke="#4a7fc0"/></svg>
<div class="a" style="left:791px;top:272px;width:90px;height:26px;background:linear-gradient(#fbfbfb,#f1f1f1);border:1px solid #e3e3e3;border-radius:2px"></div>
<svg style="left:797px;top:281px" width="11" height="10" viewBox="0 0 11 10"><rect x="0" y="0" width="11" height="1.2" fill="#3f6d9c"/><rect x="0" y="2" width="7" height="1.2" fill="#3f6d9c"/><rect x="0" y="4" width="11" height="1.2" fill="#3f6d9c"/><rect x="0" y="6" width="7" height="1.2" fill="#3f6d9c"/><rect x="0" y="8" width="11" height="1.2" fill="#3f6d9c"/></svg>
<svg style="left:819px;top:281px" width="11" height="10" viewBox="0 0 11 10"><rect x="0.0" y="0" width="11" height="1.2" fill="#3f6d9c"/><rect x="2.0" y="2" width="7" height="1.2" fill="#3f6d9c"/><rect x="0.0" y="4" width="11" height="1.2" fill="#3f6d9c"/><rect x="2.0" y="6" width="7" height="1.2" fill="#3f6d9c"/><rect x="0.0" y="8" width="11" height="1.2" fill="#3f6d9c"/></svg>
<svg style="left:841px;top:281px" width="11" height="10" viewBox="0 0 11 10"><rect x="0" y="0" width="11" height="1.2" fill="#3f6d9c"/><rect x="4" y="2" width="7" height="1.2" fill="#3f6d9c"/><rect x="0" y="4" width="11" height="1.2" fill="#3f6d9c"/><rect x="4" y="6" width="7" height="1.2" fill="#3f6d9c"/><rect x="0" y="8" width="11" height="1.2" fill="#3f6d9c"/></svg>
<svg style="left:863px;top:281px" width="11" height="10" viewBox="0 0 11 10"><rect x="0" y="0" width="11" height="1.2" fill="#3f6d9c"/><rect x="0" y="2" width="11" height="1.2" fill="#3f6d9c"/><rect x="0" y="4" width="11" height="1.2" fill="#3f6d9c"/><rect x="0" y="6" width="11" height="1.2" fill="#3f6d9c"/><rect x="0" y="8" width="11" height="1.2" fill="#3f6d9c"/></svg>
<div class="a" style="left:897px;top:272px;width:68px;height:26px;background:linear-gradient(#fbfbfb,#f1f1f1);border:1px solid #e3e3e3;border-radius:2px"></div>
<div class="a" style="left:942px;top:273px;width:22px;height:24px;background:#aed4f7;border:1px solid #7ab6ea"></div>
<svg style="left:900px;top:276px" width="62" height="18" viewBox="0 0 62 18"><path d="M2 2.5h12M2 5.5h12" stroke="#5478a0" stroke-width="1.3"/><path d="M24 6.5h12M24 9.5h9" stroke="#5478a0" stroke-width="1.3"/><path d="M46 11.5h12M46 14.5h12" stroke="#5478a0" stroke-width="1.3"/></svg>
<div class="a" style="left:792px;top:307px;font-size:11px;color:#9a9a9a;line-height:16px;letter-spacing:-0.2px">Left indent:</div>
<div class="a" style="left:792px;top:325px;width:81px;height:20px;background:#fff;border:1px solid #8fb0d8"></div>
<div class="a" style="left:796px;top:327px;font-size:11px;color:#a0a0a0;line-height:16px">0pt</div>
<div class="a" style="left:857px;top:327px;width:14px;height:16px;background:#f0f0f0;border-left:1px solid #d8d8d8"></div>
<svg style="left:860px;top:329px" width="8" height="12" viewBox="0 0 8 12"><path d="M1 4l3-3l3 3z" fill="#555"/><path d="M1 8l3 3l3-3z" fill="#555"/></svg>
<svg style="left:888px;top:312px" width="12" height="12" viewBox="0 0 12 12"><rect x="0.5" y="0.5" width="11" height="11" fill="#fff" stroke="#333"/><path d="M2.5 6l2.5 3l4.5-6.5" stroke="#111" stroke-width="1.8" fill="none"/></svg>
<div class="a" style="left:902px;top:309px;font-size:11.5px;color:#151515;line-height:16px;letter-spacing:-0.3px">Wrap text</div>
<svg style="left:888px;top:335px" width="12" height="12" viewBox="0 0 12 12"><rect x="0.5" y="0.5" width="11" height="11" fill="#e6e6e6" stroke="#c4c4c4"/></svg>
<div class="a" style="left:902px;top:332px;font-size:11.5px;color:#a0a0a0;line-height:16px;letter-spacing:-0.3px">Merge cells</div>
<div class="a" style="left:792px;top:352px;font-size:11.5px;color:#151515;line-height:16px;letter-spacing:-0.3px">Text orientation:</div>
<svg style="left:790px;top:370px" width="46" height="46" viewBox="0 0 46 46"><circle cx="23" cy="23" r="21.5" fill="none" stroke="#4b6c94" stroke-width="1"/><path d="M23 23H44" stroke="#3c5a80" stroke-width="1.2"/><circle cx="23" cy="23" r="1.5" fill="#3c5a80"/></svg>
<div class="a" style="left:852px;top:377px;width:116px;height:21px;background:#fff;border:1px solid #a9aeb4"></div>
<div class="a ui" style="left:856px;top:378px;font-size:11px;color:#1a1a1a;line-height:21px;letter-spacing:-0.5px">0 degrees</div>
<div class="a" style="left:951px;top:379px;width:15px;height:17px;background:#e9e9e9;border:1px solid #8f9499;box-shadow:inset 1px 1px 0 #fbfbfb"></div>
<svg style="left:955.5px;top:385.5px" width="8" height="5" viewBox="0 0 8 5"><path d="M0.5 0.5l3.5 3.5l3.5-3.5" stroke="#3a3a3a" stroke-width="1.4" fill="none"/></svg>
<svg style="left:852px;top:409px" width="12" height="12" viewBox="0 0 12 12"><rect x="0.5" y="0.5" width="11" height="11" fill="#fff" stroke="#333"/></svg>
<div class="a" style="left:867px;top:406px;font-size:11.5px;color:#151515;line-height:16px;letter-spacing:-0.3px">Vertically stacked</div>
<div class="a" style="left:867px;top:420px;width:7px;height:1px;background:#222"></div>
<div class="a" style="left:902px;top:323px;width:10px;height:1px;background:#222"></div>
<div class="a" style="left:902px;top:346px;width:9px;height:1px;background:#aaa"></div>
<div class="a" style="left:815px;top:364px;width:6px;height:1px;background:#222"></div>
<div class="a" style="left:792px;top:465px;width:7px;height:1px;background:#222"></div>
<div class="a" style="left:814px;top:514px;width:6px;height:1px;background:#222"></div>
<div class="a" style="left:857px;top:591px;width:6px;height:1px;background:#222"></div>
<div class="a" style="left:811px;top:322px;width:3px;height:1px;background:#999"></div>
<div class="a" style="left:787px;top:427px;width:190px;height:22px;background:linear-gradient(#dedede,#efefef);border-bottom:1px solid #e4e4e4"></div>
<svg style="left:791px;top:434.5px" width="10" height="10" viewBox="0 0 10 10"><rect x="0.5" y="0.5" width="9" height="9" fill="#f4f6f8" stroke="#5b7590"/><path d="M2.5 5h5" stroke="#333" stroke-width="1.2"/></svg>
<div class="a" style="left:803px;top:430.5px;font-size:11.5px;font-weight:bold;color:#151515;line-height:18px;letter-spacing:-0.6px">Cell Appearance</div>
<svg style="left:962px;top:430.0px" width="12" height="11" viewBox="0 0 12 11"><rect x="0.5" y="0.5" width="11" height="10" fill="#f6f8fb" stroke="#4a7fc0"/><path d="M0.5 2.5h11" stroke="#4a7fc0" stroke-width="2"/><path d="M3 7.5h1M5.5 7.5h1M8 7.5h1" stroke="#4a7fc0"/></svg>
<div class="a" style="left:792px;top:451px;font-size:11.5px;color:#151515;line-height:16px;letter-spacing:-0.3px">Cell background:</div>
<div class="a" style="left:791px;top:467px;width:86px;height:23px;background:linear-gradient(#fbfbfb,#f1f1f1);border:1px solid #e3e3e3;border-radius:2px"></div>
<svg style="left:796px;top:471px" width="15" height="14" viewBox="0 0 15 14"><path d="M1.5 6.5l5-5l5.5 5.5l-5 5z" fill="#e8f1fb" stroke="#2f5f96" stroke-width="1.2" stroke-linejoin="round"/><path d="M1.5 6.5h10.5" stroke="#2f5f96" stroke-width="1"/><path d="M1.5 6.5l5.5 5.5l5-5z" fill="#3f7fd0"/><path d="M12.5 7c1.5 1.5 1.5 3 0.5 4" stroke="#2f5f96" stroke-width="1.2" fill="none"/><path d="M4 3.5c-1-2-3-1-3 1" stroke="#2f5f96" fill="none"/></svg>
<div class="a" style="left:812px;top:473px;width:49px;height:10px;background:#d8ead0;border:1px solid #40668e"></div>
<svg style="left:867.5px;top:476.5px" width="5" height="3" viewBox="0 0 5 3"><path d="M0 0h5L2.5 3z" fill="#111"/></svg>
<div class="a" style="left:792px;top:500px;font-size:11.5px;color:#151515;line-height:16px;letter-spacing:-0.3px">Cell border:</div>
<div class="a" style="left:791px;top:516px;width:58px;height:50px;background:linear-gradient(#fbfbfb,#f1f1f1);border:1px solid #e3e3e3;border-radius:2px"></div>
<svg style="left:796px;top:521px" width="38" height="39" viewBox="0 0 38 39"><rect x="0.5" y="0.5" width="36" height="36" fill="none" stroke="#4a78c0" stroke-dasharray="1 2"/><path d="M18.5 0v37M0 18.5h37" stroke="#4a78c0" stroke-dasharray="1 2"/></svg>
<svg style="left:838.5px;top:539.5px" width="5" height="3" viewBox="0 0 5 3"><path d="M0 0h5L2.5 3z" fill="#111"/></svg>
<div class="a" style="left:857px;top:516px;width:87px;height:23px;background:linear-gradient(#fbfbfb,#f1f1f1);border:1px solid #e3e3e3;border-radius:2px"></div>
<div class="a" style="left:863px;top:527px;width:65px;height:1px;background:#c2c2c2"></div>
<svg style="left:934.5px;top:525.5px" width="5" height="3" viewBox="0 0 5 3"><path d="M0 0h5L2.5 3z" fill="#b8bcc0"/></svg>
<div class="a" style="left:857px;top:546px;width:87px;height:23px;background:linear-gradient(#fbfbfb,#f1f1f1);border:1px solid #e3e3e3;border-radius:2px"></div>
<svg style="left:861px;top:551px" width="16" height="13" viewBox="0 0 16 13"><path d="M1 11l2-5l6-5l2 2l-5 6z" fill="none" stroke="#c0c4c8"/><path d="M6 12h9" stroke="#c0c4c8"/></svg>
<div class="a" style="left:879px;top:552px;width:49px;height:10px;background:#ececec;border:1px solid #d2d2d2"></div>
<svg style="left:934.5px;top:555.5px" width="5" height="3" viewBox="0 0 5 3"><path d="M0 0h5L2.5 3z" fill="#b8bcc0"/></svg>
<svg style="left:792px;top:578px" width="12" height="12" viewBox="0 0 12 12"><rect x="0.5" y="0.5" width="11" height="11" fill="#fff" stroke="#333"/><path d="M2.5 6l2.5 3l4.5-6.5" stroke="#111" stroke-width="1.8" fill="none"/></svg>
<div class="a" style="left:807px;top:576px;font-size:11.5px;color:#151515;line-height:16px;letter-spacing:-0.3px">Show cell grid lines</div>
<div class="a" style="left:787px;top:600px;width:190px;height:23px;background:linear-gradient(#dedede,#efefef);border-bottom:1px solid #e4e4e4"></div>
<svg style="left:791px;top:608.0px" width="10" height="10" viewBox="0 0 10 10"><rect x="0.5" y="0.5" width="9" height="9" fill="#f4f6f8" stroke="#5b7590"/><path d="M2.5 5h5M5 2.5v5" stroke="#333" stroke-width="1.2"/></svg>
<div class="a" style="left:803px;top:604.0px;font-size:11.5px;font-weight:bold;color:#151515;line-height:18px;letter-spacing:-0.6px">Number Format</div>
<svg style="left:962px;top:603.5px" width="12" height="11" viewBox="0 0 12 11"><rect x="0.5" y="0.5" width="11" height="10" fill="#f6f8fb" stroke="#4a7fc0"/><path d="M0.5 2.5h11" stroke="#4a7fc0" stroke-width="2"/><path d="M3 7.5h1M5.5 7.5h1M8 7.5h1" stroke="#4a7fc0"/></svg>
<div class="a" style="left:787px;top:623px;width:190px;height:1px;background:#e6e6e6"></div>
<svg style="left:991px;top:113px" width="10" height="12" viewBox="0 0 10 12"><rect x="0.5" y="0.5" width="6" height="6" fill="#8a96a4"/><path d="M0 3h7" stroke="#555"/><path d="M4 8h6l-3 3z" fill="#222"/></svg>
<div class="a" style="left:981px;top:139px;width:29px;height:29px;border:2px solid #c9c9c9;border-radius:4px;background:#f4f4f4"></div>
<svg style="left:986px;top:143px" width="18" height="19" viewBox="0 0 18 19"><ellipse cx="9" cy="17.5" rx="7" ry="1.5" fill="#d0d0d0"/><path d="M1 4.5l8-4l8 4v9l-8 4.5l-8-4.5z" fill="#7ed63a"/><path d="M1 4.5l8 4v9.5l-8-4.5z" fill="#2aa3f2"/><path d="M1 4.5l8-4l4 2l-8 4z" fill="#3ab0f7"/><path d="M9 8.5l8-4v4.5l-8 4z" fill="#8fe04a"/><path d="M5 6.5v9M1 9l8 4.5l8-4.5M9 8.5l8-4M5 2.5l8 4M13 6.5v9.5" stroke="#fff" stroke-width="0.9" fill="none"/></svg>
<svg style="left:985px;top:172px" width="22" height="22" viewBox="0 0 22 22"><ellipse cx="11" cy="20" rx="8" ry="1.5" fill="#d4d4d4"/><path d="M5 18l5-12l6 6z" fill="#1f7fd6"/><path d="M10 6c3 0 6 3 6 6" stroke="#13304f" stroke-width="2.5" fill="none"/><path d="M11 16c3 1 5-1 5-3" stroke="#6bbf26" stroke-width="3" fill="none"/><path d="M4 6c0-3 4-3 6 0" stroke="#d86b12" stroke-width="2.4" fill="none"/><circle cx="11" cy="2.5" r="2" fill="#d46be0"/><path d="M17 0.5l1 2.2l2.4 0.3l-1.8 1.6l0.5 2.3l-2.1-1.2l-2.1 1.2l0.5-2.3l-1.8-1.6l2.4-0.3z" fill="#f4cc3a"/><circle cx="3" cy="11" r="2" fill="#f06bb5"/><circle cx="18.5" cy="11" r="1.8" fill="#f05a5a"/></svg>
<svg style="left:985px;top:203px" width="22" height="21" viewBox="0 0 22 21"><ellipse cx="11" cy="19.5" rx="8" ry="1.3" fill="#d4d4d4"/><path d="M1 7l14-5l4 11l-14 5z" fill="#fbfbfb" stroke="#9aa4ae" stroke-width="0.8"/><path d="M4 8l10-3.5l2.7 7.5l-10 3.5z" fill="#8ccdf2"/><path d="M5 13l4-3l3 2l2-2l2.5 2.2l-10 3.5z" fill="#5ab03a"/><path d="M8 9l2-2l2 2v2h-4z" fill="#fff" stroke="#3a78c0" stroke-width="0.7"/></svg>
<svg style="left:985px;top:234px" width="22" height="22" viewBox="0 0 22 22"><ellipse cx="11" cy="20.5" rx="8" ry="1.3" fill="#d4d4d4"/><circle cx="11" cy="10" r="8.3" fill="#fff" stroke="#f0a020" stroke-width="2.4"/><path d="M15 5l-3.2 6.2l-2-2z" fill="#2d5db8"/><path d="M7 15l3.2-6.2l2 2z" fill="#e22a2a"/><text x="9" y="6" font-size="4" font-family="Liberation Sans" fill="#333">N</text></svg>
<svg style="left:985px;top:264px" width="22" height="23" viewBox="0 0 22 23"><ellipse cx="11" cy="21.5" rx="8" ry="1.3" fill="#d4d4d4"/><path d="M7 1h9l4 4v14H7z" fill="#f4f8fc" stroke="#5a86b8"/><path d="M16 1v4h4" fill="#dbe8f5" stroke="#5a86b8"/><text x="1" y="17" font-size="16" font-style="italic" font-family="Liberation Serif" fill="#1f4a7a">f</text><text x="9" y="17" font-size="11" font-family="Liberation Serif" font-style="italic" fill="#1f4a7a">x</text></svg>
</body></html>
